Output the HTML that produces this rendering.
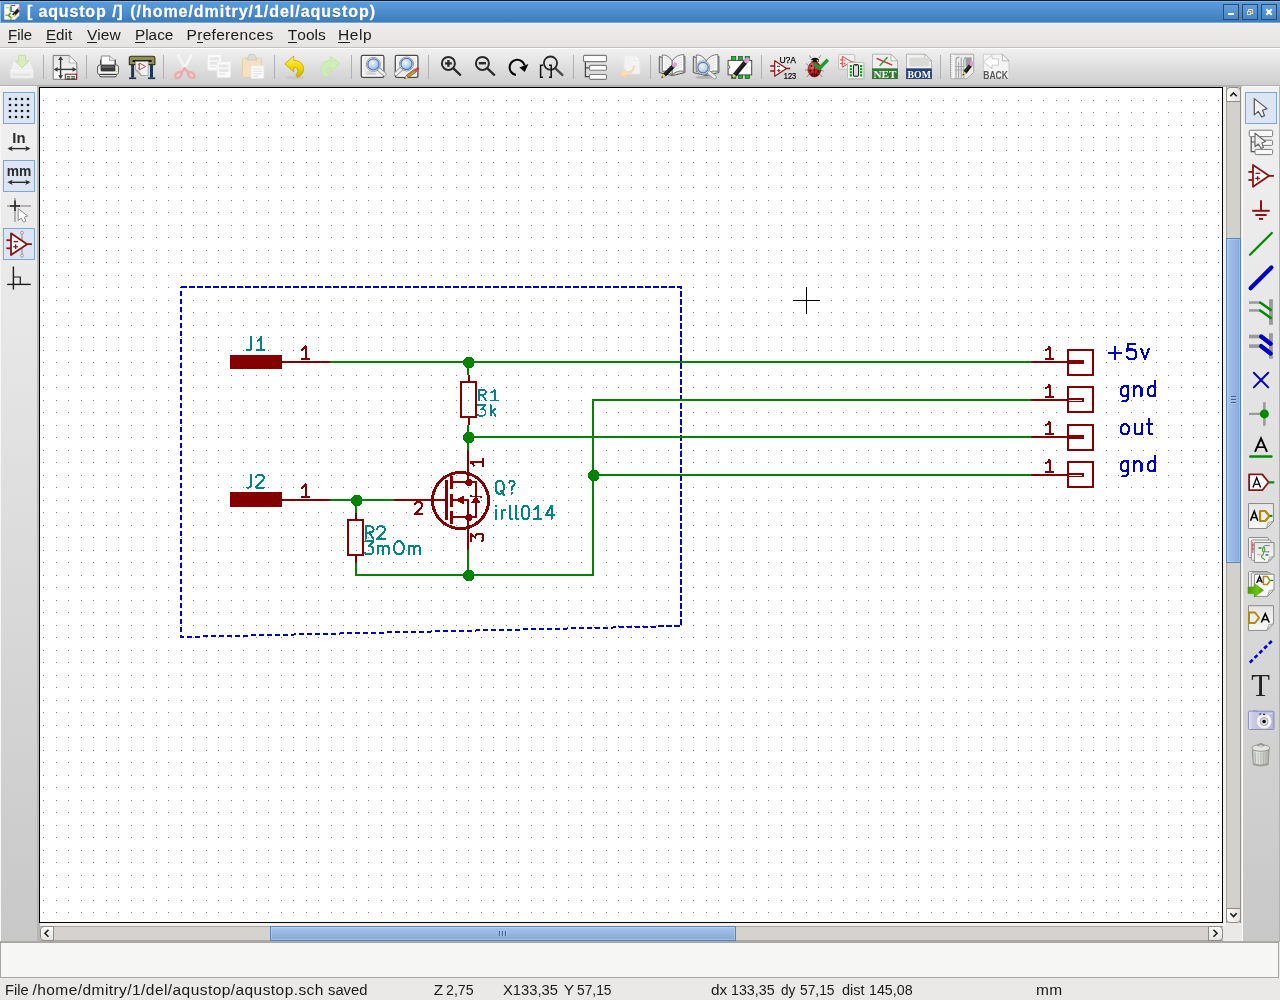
<!DOCTYPE html><html><head><meta charset="utf-8"><title>aqustop</title><style>
*{box-sizing:border-box;margin:0;padding:0}
html,body{width:1280px;height:1000px;overflow:hidden}
body{position:relative;background:#ebe9e7;font-family:"Liberation Sans",sans-serif;color:#1a1a1a}
.abs{position:absolute}
svg{position:absolute;overflow:visible}
#title{will-change:transform;left:0;top:0;width:1280px;height:23px;background:linear-gradient(#5c9cda 0px,#5596d6 6px,#3f7ebd 21px,#3d7ab8 23px)}
#title .t0{left:0;top:0;width:1280px;height:1px;background:#151a20}
#title .t1{left:0;top:1px;width:1280px;height:1px;background:#7ab6f2}
#title .t2{left:0;top:22px;width:1280px;height:1px;background:#6fa7df}
#title .txt{-webkit-text-stroke:0.3px #fff;top:2px;height:19px;line-height:19px;font-weight:bold;font-size:16px;color:#fff;white-space:nowrap;text-shadow:0 1px 1px rgba(30,60,100,.55)}
.wb{top:4px;width:16px;height:16px;border:1px solid #2b4b6e;background:linear-gradient(#62a0dc,#4685c6)}
#menu{will-change:transform;left:0;top:23px;width:1280px;height:25px;background:linear-gradient(#f4f2ef 0px,#f4f2ef 1px,#eeecea 1px,#e7e5e3 24px)}
#menu span{position:absolute;top:3px;height:18px;line-height:18px;font-size:15.5px;white-space:nowrap;color:#1a1a1a}
#menu u{text-decoration:none;border-bottom:1px solid #1a1a1a;display:inline-block;line-height:15px}
#tb{left:0;top:47px;width:1280px;height:39px;background:linear-gradient(#c4c2c0 0px,#c4c2c0 1px,#fdfdfd 1px,#fdfdfd 2px,#f0f0f0 2px,#e9e9e9 10px,#dcdcdc 23px,#cecece 38px,#b0b0b0 38px,#b0b0b0 39px)}
.sep{top:8px;width:1px;height:24px;background:#b1b1b1}
#ltb{left:0;top:86px;width:37px;height:855px;background:linear-gradient(#f1f1f1,#e6e6e6 30%,#cbcbcb 92%,#c8c8c8);border-top:1px solid #fcfcfc;border-left:1px solid #f6f6f6}
#lgap{left:37px;top:86px;width:3px;height:855px;background:#b6b6b6}
#tgap{left:37px;top:86px;width:1205px;height:1px;background:#b6b6b6}
#rgap{left:1223px;top:87px;width:3px;height:839px;background:#f3f1ee}
#bgap{left:40px;top:923px;width:1186px;height:3px;background:#f3f1ee}
#rtb{left:1242px;top:86px;width:38px;border-left:1px solid #fdfdfd;border-right:1px solid #b2b2b2;border-top:1px solid #fcfcfc;height:855px;background:linear-gradient(#f1f1f1,#e6e6e6 30%,#cbcbcb 92%,#c8c8c8)}
.tbtn{width:32px;height:32px;border:1px solid #7ea6d9;background:#dbe5f3}
#canvas{left:39px;top:87px;width:1184px;height:836px;border:1px solid #000;background:#fff}
#vsb{left:1226px;top:87px;width:15px;height:836px;background:#d3d1ce;border-left:1px solid #a6a39f;border-right:1px solid #908e8a}
#hsb{left:40px;top:926px;width:1183px;height:15px;background:#d6d2ce;border-top:1px solid #aaa7a3;border-bottom:1px solid #aaa7a3}
.sbtn{background:linear-gradient(#fdfdfd,#e6e4e2);border:1px solid #8f8c88}
.sbv{background:linear-gradient(90deg,#fdfdfd,#e4e2e0)}
.thumbv{left:1226px;width:15px;background:linear-gradient(90deg,#a7c3e9,#86aada);border:1px solid #5d83b4;box-shadow:inset 0 0 0 1px rgba(255,255,255,.22)}
.thumbh{top:926px;height:15px;background:linear-gradient(#a7c3e9,#86aada);border:1px solid #5d83b4;box-shadow:inset 0 0 0 1px rgba(255,255,255,.22)}
#msg{left:0;top:942px;width:1279px;height:36px;background:#f6f6f4;border:1px solid #a6a6a4}
#l941{left:0;top:941px;width:1280px;height:1px;background:#acaaa6}
#status{will-change:transform;left:0;top:978px;width:1280px;height:22px;background:#ebe9e7}
#status span{position:absolute;top:3px;height:18px;line-height:18px;font-size:15.5px;white-space:nowrap;color:#1a1a1a}
</style></head><body>
<svg style="left:0;top:0" width="0" height="0"><defs><linearGradient id="gpage" x1="0" y1="0" x2="0" y2="1"><stop offset="0" stop-color="#e4e4e4"/><stop offset="1" stop-color="#fafafa"/></linearGradient><linearGradient id="gcam" x1="0" y1="0" x2="1" y2="0"><stop offset="0" stop-color="#e6e6f2"/><stop offset="0.18" stop-color="#c9c9e8"/><stop offset="1" stop-color="#b4b4de"/></linearGradient><linearGradient id="gtrash" x1="0" y1="0" x2="1" y2="0"><stop offset="0" stop-color="#b4b6b2"/><stop offset="0.3" stop-color="#ecedeb"/><stop offset="0.6" stop-color="#d0d2ce"/><stop offset="1" stop-color="#acaeaa"/></linearGradient><linearGradient id="ggreen" x1="0" y1="0" x2="1" y2="0"><stop offset="0" stop-color="#4e9a06"/><stop offset="0.6" stop-color="#6cc412"/><stop offset="1" stop-color="#4e9a06"/></linearGradient><radialGradient id="glens" cx="0.4" cy="0.35" r="0.7"><stop offset="0" stop-color="#f2f6fc"/><stop offset="0.6" stop-color="#b9d0ee"/><stop offset="1" stop-color="#86acde"/></radialGradient><radialGradient id="glens2" cx="0.4" cy="0.35" r="0.7"><stop offset="0" stop-color="#eef2f6"/><stop offset="0.7" stop-color="#c4d0de"/><stop offset="1" stop-color="#9ab4d4"/></radialGradient><linearGradient id="gyel" x1="0" y1="0" x2="0" y2="1"><stop offset="0" stop-color="#fff27a"/><stop offset="0.5" stop-color="#f5d800"/><stop offset="1" stop-color="#d4aa00"/></linearGradient><radialGradient id="gbug" cx="0.35" cy="0.3" r="0.8"><stop offset="0" stop-color="#ff6a6a"/><stop offset="0.5" stop-color="#e01818"/><stop offset="1" stop-color="#8a0000"/></radialGradient></defs></svg>
<div id="title" class="abs"><div class="abs t0"></div><div class="abs t1"></div><div class="abs t2"></div>
<svg style="left:0;top:0;will-change:transform" width="1280" height="1000" viewBox="0 0 1280 1000"><path d="M3.9 3.9 H19.7 V15 L14.6 19.9 H3.9 Z" fill="#fbfbfb" stroke="#3f76b4" stroke-width="0.6" /><path d="M19.7 15 L14.6 19.9 L15.4 16 Z" fill="#e4e4e4" stroke="none" stroke-width="1" /><rect x="9.7" y="6.4" width="2.3" height="4.8" fill="#4eaa22" stroke="none" stroke-width="1" rx="0" /><path d="M10.8 13 L8.4 15.3 L11 17.6" fill="none" stroke="#4eaa22" stroke-width="1.7" /><rect x="10" y="18.4" width="2" height="1.4" fill="#6cc040" stroke="none" stroke-width="1" rx="0" /><line x1="10.6" y1="5.6" x2="14" y2="5.6" stroke="#3c5cb8" stroke-width="1" stroke-linecap="butt"/><circle cx="14.5" cy="5.5" r="0.75" fill="#cc2a2a" stroke="none" stroke-width="1"/><line x1="10.2" y1="11.6" x2="13" y2="11.6" stroke="#3c5cb8" stroke-width="1" stroke-linecap="butt"/><circle cx="13.5" cy="11.5" r="0.7" fill="#cc2a2a" stroke="none" stroke-width="1"/><circle cx="6.1" cy="15.2" r="0.75" fill="#d04a5a" stroke="none" stroke-width="1"/><line x1="6.8" y1="15.3" x2="8.4" y2="15.3" stroke="#6a7ad0" stroke-width="0.8" stroke-linecap="butt"/><rect x="6.3" y="6.9" width="2.4" height="1.5" fill="#b8b8b8" stroke="none" stroke-width="1" rx="0" /><line x1="18.6" y1="9.6" x2="13.4" y2="15.4" stroke="#202020" stroke-width="3.4" stroke-linecap="butt"/><line x1="19.9" y1="8.1" x2="18.9" y2="9.2" stroke="#e67ad6" stroke-width="3.4" stroke-linecap="butt"/><line x1="18.9" y1="9.2" x2="18.4" y2="9.8" stroke="#9a9a9a" stroke-width="3.4" stroke-linecap="butt"/><path d="M14.5 14.1 L12.2 16.6 L11.4 17.8 L13.4 17.2 L15.9 15.4 Z" fill="#e6d860" stroke="none" stroke-width="1" /><path d="M11.3 17.9 L11.9 16.9 L12.5 17.5 Z" fill="#3a3a2a" stroke="none" stroke-width="1" /><rect x="0" y="1" width="1" height="22" fill="#86bcec" stroke="none" stroke-width="1" rx="0" /></svg>
<div class="abs txt" style="left:27.0px;letter-spacing:0px">[</div>
<div class="abs txt" style="left:38.4px;letter-spacing:0.859px">aqustop</div>
<div class="abs txt" style="left:112.2px;letter-spacing:0.655px">/]</div>
<div class="abs txt" style="left:130.2px;letter-spacing:0.968px">(/home/dmitry/1/del/aqustop)</div>
<div class="abs wb" style="left:1223px"></div>
<div class="abs wb" style="left:1242px"></div>
<div class="abs wb" style="left:1261px"></div>
<svg style="left:0;top:0;will-change:transform" width="1280" height="1000" viewBox="0 0 1280 1000"><rect x="1228" y="13" width="6" height="2" fill="#ffffff" stroke="none" stroke-width="1" rx="0" /><rect x="1248.5" y="9.5" width="4" height="4" fill="none" stroke="#ead7c0" stroke-width="1" rx="0" /><rect x="1247.5" y="11.5" width="3" height="3" fill="#4f8fce" stroke="#ead7c0" stroke-width="1" rx="0" /><path d="M1267 10 L1271 14 M1271 10 L1267 14" fill="none" stroke="#ffffff" stroke-width="2" stroke-linecap="square"/></svg>
</div>
<div id="menu" class="abs">
<span style="left:7.63px;letter-spacing:0px;transform-origin:0 0;transform:scaleX(0.9677)"><u>F</u>ile</span>
<span style="left:46.2px;letter-spacing:0px;transform-origin:0 0;transform:scaleX(0.9772)"><u>E</u>dit</span>
<span style="left:87.0px;letter-spacing:0px;"><u>V</u>iew</span>
<span style="left:134.61px;letter-spacing:0px;transform-origin:0 0;transform:scaleX(0.9878)"><u>P</u>lace</span>
<span style="left:186.5px;letter-spacing:0.308px;">P<u>r</u>eferences</span>
<span style="left:287.8px;letter-spacing:0.0px;"><u>T</u>ools</span>
<span style="left:338.0px;letter-spacing:0.581px;"><u>H</u>elp</span>
</div>
<div id="tb" class="abs">
<div class="abs sep" style="left:43px"></div>
<div class="abs sep" style="left:86px"></div>
<div class="abs sep" style="left:163px"></div>
<div class="abs sep" style="left:274px"></div>
<div class="abs sep" style="left:351px"></div>
<div class="abs sep" style="left:428px"></div>
<div class="abs sep" style="left:573px"></div>
<div class="abs sep" style="left:650px"></div>
<div class="abs sep" style="left:761px"></div>
<div class="abs sep" style="left:940px"></div>
</div>
<svg style="left:0;top:0;will-change:transform" width="1280" height="1000" viewBox="0 0 1280 1000"><path d="M13.4 60.6 H30.3 L33.4 70.6 V77.4 Q33.4 78.2 32.6 78.2 H11 Q10.2 78.2 10.2 77.4 V70.6 Z" fill="#f0f0f0" stroke="#e2e2e2" stroke-width="1" stroke-linejoin="round"/><path d="M10.4 70.8 H33.2" fill="none" stroke="#f8f8f8" stroke-width="1" /><rect x="12.5" y="73.6" width="18.5" height="2" fill="#e2e2e2" stroke="none" stroke-width="1" rx="0" /><path d="M18.7 55.3 H25.6 V61.2 H28.8 L22.1 67.9 L15.5 61.2 H18.7 Z" fill="#dcebc0" stroke="#c6dea6" stroke-width="1" stroke-linejoin="round"/><path d="M53.2 55.4 H69.3 L76.8 62.9 V79.3 H53.2 Z" fill="url(#gpage)" stroke="#7a7a7a" stroke-width="1" stroke-linejoin="round"/><path d="M69.3 55.4 L76.8 62.9 L69.3 62.9 Z" fill="#ffffff" stroke="#9a9a9a" stroke-width="0.7" stroke-linejoin="round"/><line x1="60.6" y1="57.5" x2="60.6" y2="78" stroke="#3a3a3a" stroke-width="1.4" stroke-linecap="butt"/><line x1="55" y1="69.4" x2="75.4" y2="69.4" stroke="#3a3a3a" stroke-width="1.4" stroke-linecap="butt"/><path d="M60.6 56.3 L58.2 60 H63 Z M60.6 79 L58.2 75.3 H63 Z M53.8 69.4 L57.6 67 V71.8 Z M76.4 69.4 L72.6 67 V71.8 Z" fill="#3a3a3a" stroke="none" stroke-width="1" /><rect x="65.3" y="74.2" width="11.3" height="5" fill="#f4f4f4" stroke="#7a1a1a" stroke-width="1" rx="0" /><rect x="66.8" y="76.2" width="3.4" height="1.2" fill="#1e5a1e" stroke="none" stroke-width="1" rx="0" /><rect x="71.2" y="76.2" width="3.8" height="1.2" fill="#1e5a1e" stroke="none" stroke-width="1" rx="0" /><rect x="66.8" y="78.2" width="3.4" height="1" fill="#1e5a1e" stroke="none" stroke-width="1" rx="0" /><rect x="71.2" y="78.2" width="3.8" height="1" fill="#1e5a1e" stroke="none" stroke-width="1" rx="0" /><rect x="100" y="59.6" width="1.6" height="6" fill="#444" stroke="none" stroke-width="1" rx="0" /><rect x="114.4" y="59.6" width="1.6" height="6" fill="#444" stroke="none" stroke-width="1" rx="0" /><path d="M101.3 56 H109.6 L114.8 60.6 V66 H101.3 Z" fill="#fdfdfd" stroke="#7a7a7a" stroke-width="0.9" stroke-linejoin="round"/><path d="M109.6 56 V60.6 H114.8" fill="#eaeaea" stroke="#8a8a8a" stroke-width="0.7" /><rect x="97.5" y="65" width="21" height="9.4" fill="url(#gpage)" stroke="#5e5e5e" stroke-width="1" rx="2" /><rect x="101" y="65.5" width="14" height="5.6" fill="#3a3a3a" stroke="#222" stroke-width="0.6" rx="0.6" /><rect x="101.6" y="66.2" width="12.8" height="1.6" fill="#6a6a6a" stroke="none" stroke-width="1" rx="0" /><circle cx="116.4" cy="71.6" r="0.8" fill="#7fdc4a" stroke="none" stroke-width="1"/><path d="M99.6 74.4 H116.4 V75.4 Q116.4 76.8 115 76.8 H101 Q99.6 76.8 99.6 75.4 Z" fill="#fafafa" stroke="#444" stroke-width="1" /><line x1="101.5" y1="74.6" x2="114.5" y2="74.6" stroke="#333" stroke-width="1" stroke-linecap="butt"/><rect x="131.1" y="64" width="3" height="13.6" fill="#1f3558" stroke="none" stroke-width="1" rx="0" /><rect x="150" y="64" width="3" height="13.6" fill="#1f3558" stroke="none" stroke-width="1" rx="0" /><rect x="129" y="77.4" width="7.2" height="1.7" fill="#1f3558" stroke="none" stroke-width="1" rx="0" /><rect x="148" y="77.4" width="7.2" height="1.7" fill="#1f3558" stroke="none" stroke-width="1" rx="0" /><path d="M129.3 64.6 V58 Q129.3 56.2 131.2 56.2 H153 Q154.9 56.2 154.9 58 V64.6 Z" fill="#8e8e50" stroke="#33331a" stroke-width="1.1" stroke-linejoin="round"/><rect x="132.4" y="59.9" width="19.4" height="2.1" fill="#15150a" stroke="none" stroke-width="0" rx="1" /><path d="M135.6 61.4 H148.2 V75.5 H141 L135.6 70 Z" fill="#f2f2f2" stroke="#9a9a9a" stroke-width="0.8" stroke-linejoin="round"/><path d="M135.6 70 Q139.8 70.2 141 75.5 Q139.5 72.2 135.6 70" fill="#ffffff" stroke="#8a8a8a" stroke-width="0.7" /><path d="M139.3 63 V70 L145.6 66.5 Z M139.3 64.8 H137.9 M139.3 68.2 H137.9" fill="none" stroke="#cc4646" stroke-width="1" /><line x1="178.3" y1="55.8" x2="185.8" y2="69.5" stroke="#f6f6f6" stroke-width="3" stroke-linecap="round"/><line x1="191.1" y1="55.8" x2="183.6" y2="69.5" stroke="#f6f6f6" stroke-width="3" stroke-linecap="round"/><line x1="178.3" y1="55.8" x2="185.8" y2="69.5" stroke="#e6e6e6" stroke-width="0.5" stroke-linecap="butt"/><line x1="184.9" y1="68.3" x2="180.8" y2="72.8" stroke="#f1a9a9" stroke-width="2.6" stroke-linecap="round"/><line x1="184.5" y1="68.3" x2="188.8" y2="72.8" stroke="#f1a9a9" stroke-width="2.6" stroke-linecap="round"/><ellipse cx="178.3" cy="75" rx="3.6" ry="2.5" transform="rotate(-42 178.3 75)" fill="none" stroke="#f1a9a9" stroke-width="2.2"/><ellipse cx="191.3" cy="75" rx="3.6" ry="2.5" transform="rotate(42 191.3 75)" fill="none" stroke="#f1a9a9" stroke-width="2.2"/><rect x="207.7" y="54.6" width="13.4" height="15.6" fill="#fbfbfb" stroke="#ececec" stroke-width="1" rx="0.8" /><rect x="209.7" y="57.2" width="9.4" height="3.2" fill="#e6e6e6" stroke="none" stroke-width="1" rx="0" /><rect x="209.7" y="61.6" width="9.4" height="3.2" fill="#e6e6e6" stroke="none" stroke-width="1" rx="0" /><rect x="209.7" y="66" width="6" height="1.6" fill="#e6e6e6" stroke="none" stroke-width="1" rx="0" /><rect x="217.1" y="61.8" width="13.4" height="15.6" fill="#fbfbfb" stroke="#ececec" stroke-width="1" rx="0.8" /><rect x="219.1" y="64.4" width="9.4" height="3.2" fill="#e6e6e6" stroke="none" stroke-width="1" rx="0" /><rect x="219.1" y="68.8" width="9.4" height="3.2" fill="#e6e6e6" stroke="none" stroke-width="1" rx="0" /><rect x="219.1" y="73.2" width="6" height="1.6" fill="#e6e6e6" stroke="none" stroke-width="1" rx="0" /><rect x="242.4" y="58" width="19.2" height="19.4" fill="#f4e0c2" stroke="#e6cfaa" stroke-width="1" rx="1.8" /><path d="M247 60 V58 H248.6 V55.6 Q248.6 54.6 249.6 54.6 H254 Q255 54.6 255 55.6 V58 H256.6 V60 Z" fill="#dededa" stroke="#c4c4c0" stroke-width="0.8" stroke-linejoin="round"/><rect x="251.2" y="66" width="12.6" height="12.2" fill="#fdfdfd" stroke="#ececec" stroke-width="1" rx="0.8" /><rect x="252.8" y="68.4" width="9.4" height="1.3" fill="#e4e4e4" stroke="none" stroke-width="1" rx="0" /><rect x="252.8" y="70.8" width="9.4" height="1.3" fill="#e4e4e4" stroke="none" stroke-width="1" rx="0" /><rect x="252.8" y="73.2" width="9.4" height="1.3" fill="#e4e4e4" stroke="none" stroke-width="1" rx="0" /><rect x="252.8" y="75.6" width="5.4" height="1.3" fill="#e4e4e4" stroke="none" stroke-width="1" rx="0" /><ellipse cx="295" cy="77.4" rx="9" ry="2" fill="rgba(0,0,0,0.06)" stroke="none" stroke-width="1"/><path d="M284.8 63.8 L293.8 56 V60.4 Q300.4 60.6 302.8 65.4 Q305.2 71.4 300.6 75.6 L297.2 77.3 L296 74.8 Q299.6 71.2 297.2 68.4 Q296 67.4 293.8 67.6 V71.9 Z" fill="url(#gyel)" stroke="#c9a800" stroke-width="0.9" stroke-linejoin="round"/><g transform="translate(624.5 0) scale(-1 1)"><path d="M284.8 63.8 L293.8 56 V60.4 Q300.4 60.6 302.8 65.4 Q305.2 71.4 300.6 75.6 L297.2 77.3 L296 74.8 Q299.6 71.2 297.2 68.4 Q296 67.4 293.8 67.6 V71.9 Z" fill="#cdeeb6" stroke="#bfe4a6" stroke-width="0.9" stroke-linejoin="round"/></g><rect x="361.7" y="56.2" width="22.4" height="22" fill="rgba(0,0,0,0.12)" stroke="none" stroke-width="0" rx="2" /><rect x="361.3" y="55.4" width="22.6" height="22" fill="#f6f6f6" stroke="#484848" stroke-width="1.25" rx="1.6" /><rect x="362.9" y="57" width="19.4" height="18.8" fill="#ececec" stroke="#fff" stroke-width="0.8" rx="0" /><rect x="395.7" y="56.2" width="22.4" height="22" fill="rgba(0,0,0,0.12)" stroke="none" stroke-width="0" rx="2" /><rect x="395.3" y="55.4" width="22.6" height="22" fill="#f6f6f6" stroke="#484848" stroke-width="1.25" rx="1.6" /><rect x="396.9" y="57" width="19.4" height="18.8" fill="#ececec" stroke="#fff" stroke-width="0.8" rx="0" /><line x1="366.5" y1="72" x2="375" y2="72" stroke="#c0c0c0" stroke-width="0.8" stroke-linecap="butt"/><line x1="366.5" y1="74" x2="376" y2="74" stroke="#b0b0b0" stroke-width="0.8" stroke-linecap="butt"/><line x1="378.477" y1="68.9234" x2="384.4" y2="74.2" stroke="#8a8a8a" stroke-width="4.2" stroke-linecap="round"/><line x1="378.477" y1="68.9234" x2="384.4" y2="74.2" stroke="#ececec" stroke-width="2.8" stroke-linecap="round"/><circle cx="373.4" cy="64.4" r="7" fill="#fbfbfb" stroke="#8e8e8e" stroke-width="0.9"/><circle cx="373.4" cy="64.4" r="5.6" fill="url(#glens)" stroke="#4a7cc4" stroke-width="1.2"/><line x1="401.529" y1="68.6398" x2="396" y2="73.8" stroke="#8a8a8a" stroke-width="4.2" stroke-linecap="round"/><line x1="401.529" y1="68.6398" x2="396" y2="73.8" stroke="#ececec" stroke-width="2.8" stroke-linecap="round"/><circle cx="406.5" cy="64" r="7" fill="#fbfbfb" stroke="#8e8e8e" stroke-width="0.9"/><circle cx="406.5" cy="64" r="5.6" fill="url(#glens)" stroke="#4a7cc4" stroke-width="1.2"/><path d="M404.20 78.80 L408.49 77.66 L406.53 75.02 Z" fill="#ecd9a0" stroke="#8a7a30" stroke-width="0.5" /><path d="M404.20 78.80 L405.83 78.37 L405.08 77.36 Z" fill="#1a1a1a" stroke="none" stroke-width="1" /><path d="M408.49 77.66 L416.28 71.88 L414.31 69.23 L406.53 75.02 Z" fill="#e3a02e" stroke="#000" stroke-width="0.4" /><line x1="407.666" y1="75.71" x2="415.046" y2="70.2249" stroke="#5a5a5a" stroke-width="0.6" stroke-linecap="butt"/><path d="M416.28 71.88 L417.20 71.19 L415.23 68.54 L414.31 69.23 Z" fill="#b8b8b8" stroke="#777" stroke-width="0.4" /><path d="M417.20 71.19 L415.23 68.54 A1.68 1.68 0 0 0 417.20 71.19 Z" fill="#e02424" stroke="#c080b8" stroke-width="0.3" /><circle cx="417.47" cy="68.9368" r="1.4025" fill="#e02424" stroke="none" stroke-width="1"/><line x1="453.4" y1="68.4" x2="460.2" y2="74.8" stroke="#2a2a2a" stroke-width="2.3" stroke-linecap="round"/><circle cx="448.4" cy="63.4" r="6.5" fill="none" stroke="#2a2a2a" stroke-width="2"/><line x1="487.4" y1="68.4" x2="494.2" y2="74.8" stroke="#2a2a2a" stroke-width="2.3" stroke-linecap="round"/><circle cx="482.4" cy="63.4" r="6.5" fill="none" stroke="#2a2a2a" stroke-width="2"/><line x1="445" y1="63.4" x2="451.8" y2="63.4" stroke="#2a2a2a" stroke-width="2.3" stroke-linecap="butt"/><line x1="448.4" y1="60" x2="448.4" y2="66.8" stroke="#2a2a2a" stroke-width="2.3" stroke-linecap="butt"/><line x1="478.8" y1="63.2" x2="486" y2="63.2" stroke="#2a2a2a" stroke-width="2.5" stroke-linecap="butt"/><path d="M515.96 74.98 A7.7 7.7 0 1 1 524.74 65.4" fill="none" stroke="#000" stroke-width="2.1" /><path d="M519.4 67.5 L528.4 64 L524.7 71.9 Z" fill="#000" stroke="none" stroke-width="1" /><line x1="555.4" y1="68.4" x2="562.3" y2="74.8" stroke="#4a4a4a" stroke-width="2.5" stroke-linecap="round"/><circle cx="550.5" cy="63.1" r="6.6" fill="none" stroke="#2a2a2a" stroke-width="1.8"/><path d="M543 65.2 H540.6 V77.3 H543 M549 65.2 H551.2 V77.3 H549" fill="none" stroke="#111" stroke-width="1.5" /><path d="M585.4 61.6 V76.7 H589.4 M585.4 67.8 H589.4" fill="none" stroke="#444" stroke-width="1.2" /><rect x="583.5" y="55.4" width="23" height="6.2" fill="#fdfdfd" stroke="#7c7c7c" stroke-width="1.1" rx="1.2" /><rect x="589.5" y="65.4" width="17" height="4.9" fill="#fdfdfd" stroke="#7c7c7c" stroke-width="1.1" rx="1.2" /><rect x="589.5" y="74.5" width="17" height="4.9" fill="#fdfdfd" stroke="#7c7c7c" stroke-width="1.1" rx="1.2" /><path d="M624.2 55.4 H634.6 L639.7 60.4 V73.7 H624.2 Z" fill="#f3f3f3" stroke="#ececec" stroke-width="1" stroke-linejoin="round"/><path d="M634.6 55.4 V60.4 H639.7" fill="#fafafa" stroke="#e6e6e6" stroke-width="0.7" /><path d="M633.4 66 Q633.6 71.6 625.6 72 V69.6 L618.6 74 L625.6 78 V75.4 Q633.4 74.4 634.4 66 Z" fill="#f9dcb8" stroke="#f4d0a2" stroke-width="0.7" stroke-linejoin="round"/><path d="M659.3 56.4 L672.2 61.6 L684.9 56.4 V72.6 L672.2 75.6 L659.3 72.6 Z" fill="#d6d6d6" stroke="#5a5a5a" stroke-width="1" stroke-linejoin="round"/><path d="M662.3 55 Q668.3 54.6 672.2 61 V75 Q667.3 69.5 662.3 71.6 Z" fill="#fbfbfb" stroke="#6a6a6a" stroke-width="0.9" stroke-linejoin="round"/><path d="M683.9 54.6 Q676.3 54.6 672.2 61 V75 Q677.3 69.5 683.9 71.4 Z" fill="#fbfbfb" stroke="#6a6a6a" stroke-width="0.9" stroke-linejoin="round"/><line x1="664.3" y1="57.4" x2="670.3" y2="60.2" stroke="#cfcfcf" stroke-width="0.7" stroke-linecap="butt"/><line x1="674.3" y1="60.2" x2="681.9" y2="57.2" stroke="#cfcfcf" stroke-width="0.7" stroke-linecap="butt"/><line x1="664.3" y1="59.8" x2="670.3" y2="62.6" stroke="#cfcfcf" stroke-width="0.7" stroke-linecap="butt"/><line x1="674.3" y1="62.6" x2="681.9" y2="59.6" stroke="#cfcfcf" stroke-width="0.7" stroke-linecap="butt"/><line x1="664.3" y1="62.2" x2="670.3" y2="65" stroke="#cfcfcf" stroke-width="0.7" stroke-linecap="butt"/><line x1="674.3" y1="65" x2="681.9" y2="62" stroke="#cfcfcf" stroke-width="0.7" stroke-linecap="butt"/><line x1="664.3" y1="64.6" x2="670.3" y2="67.4" stroke="#cfcfcf" stroke-width="0.7" stroke-linecap="butt"/><line x1="674.3" y1="67.4" x2="681.9" y2="64.4" stroke="#cfcfcf" stroke-width="0.7" stroke-linecap="butt"/><line x1="664.3" y1="67" x2="670.3" y2="69.8" stroke="#cfcfcf" stroke-width="0.7" stroke-linecap="butt"/><line x1="674.3" y1="69.8" x2="681.9" y2="66.8" stroke="#cfcfcf" stroke-width="0.7" stroke-linecap="butt"/><path d="M661.40 78.00 L665.98 76.04 L663.36 73.42 Z" fill="#f0e27a" stroke="#8a7a30" stroke-width="0.5" /><path d="M661.40 78.00 L663.14 77.25 L662.15 76.26 Z" fill="#1a1a1a" stroke="none" stroke-width="1" /><path d="M665.98 76.04 L674.25 67.77 L671.63 65.15 L663.36 73.42 Z" fill="#141414" stroke="#000" stroke-width="0.4" /><line x1="664.697" y1="74.049" x2="672.61" y2="66.1358" stroke="#5a5a5a" stroke-width="0.6" stroke-linecap="butt"/><path d="M674.25 67.77 L675.16 66.86 L672.54 64.24 L671.63 65.15 Z" fill="#b8b8b8" stroke="#777" stroke-width="0.4" /><path d="M675.16 66.86 L672.54 64.24 A1.89 1.89 0 0 0 675.16 66.86 Z" fill="#e79ad6" stroke="#c080b8" stroke-width="0.3" /><circle cx="675.089" cy="64.3109" r="2.072" fill="#e79ad6" stroke="none" stroke-width="1"/><path d="M693.3 56.4 L706.2 61.6 L718.9 56.4 V72.6 L706.2 75.6 L693.3 72.6 Z" fill="#d6d6d6" stroke="#5a5a5a" stroke-width="1" stroke-linejoin="round"/><path d="M696.3 55 Q702.3 54.6 706.2 61 V75 Q701.3 69.5 696.3 71.6 Z" fill="#fbfbfb" stroke="#6a6a6a" stroke-width="0.9" stroke-linejoin="round"/><path d="M717.9 54.6 Q710.3 54.6 706.2 61 V75 Q711.3 69.5 717.9 71.4 Z" fill="#fbfbfb" stroke="#6a6a6a" stroke-width="0.9" stroke-linejoin="round"/><line x1="698.3" y1="57.4" x2="704.3" y2="60.2" stroke="#cfcfcf" stroke-width="0.7" stroke-linecap="butt"/><line x1="708.3" y1="60.2" x2="715.9" y2="57.2" stroke="#cfcfcf" stroke-width="0.7" stroke-linecap="butt"/><line x1="698.3" y1="59.8" x2="704.3" y2="62.6" stroke="#cfcfcf" stroke-width="0.7" stroke-linecap="butt"/><line x1="708.3" y1="62.6" x2="715.9" y2="59.6" stroke="#cfcfcf" stroke-width="0.7" stroke-linecap="butt"/><line x1="698.3" y1="62.2" x2="704.3" y2="65" stroke="#cfcfcf" stroke-width="0.7" stroke-linecap="butt"/><line x1="708.3" y1="65" x2="715.9" y2="62" stroke="#cfcfcf" stroke-width="0.7" stroke-linecap="butt"/><line x1="698.3" y1="64.6" x2="704.3" y2="67.4" stroke="#cfcfcf" stroke-width="0.7" stroke-linecap="butt"/><line x1="708.3" y1="67.4" x2="715.9" y2="64.4" stroke="#cfcfcf" stroke-width="0.7" stroke-linecap="butt"/><line x1="698.3" y1="67" x2="704.3" y2="69.8" stroke="#cfcfcf" stroke-width="0.7" stroke-linecap="butt"/><line x1="708.3" y1="69.8" x2="715.9" y2="66.8" stroke="#cfcfcf" stroke-width="0.7" stroke-linecap="butt"/><ellipse cx="704.5" cy="77.4" rx="9" ry="1.6" fill="rgba(0,0,0,0.16)" stroke="none" stroke-width="1"/><line x1="708.008" y1="71.7442" x2="714.6" y2="77.2" stroke="#8a8a8a" stroke-width="4.2" stroke-linecap="round"/><line x1="708.008" y1="71.7442" x2="714.6" y2="77.2" stroke="#ececec" stroke-width="2.8" stroke-linecap="round"/><circle cx="703" cy="67.6" r="6.7" fill="#fbfbfb" stroke="#8e8e8e" stroke-width="0.9"/><circle cx="703" cy="67.6" r="5.3" fill="url(#glens2)" stroke="#4a7cc4" stroke-width="1.2"/><rect x="731.6" y="56.5" width="4.2" height="5.6" fill="#00c424" stroke="#3a3a3a" stroke-width="0.7" rx="0" /><rect x="731.6" y="72.8" width="4.2" height="5.6" fill="#00c424" stroke="#3a3a3a" stroke-width="0.7" rx="0" /><rect x="738.4" y="56.5" width="4.2" height="5.6" fill="#00c424" stroke="#3a3a3a" stroke-width="0.7" rx="0" /><rect x="738.4" y="72.8" width="4.2" height="5.6" fill="#00c424" stroke="#3a3a3a" stroke-width="0.7" rx="0" /><rect x="745.2" y="56.5" width="4.2" height="5.6" fill="#00c424" stroke="#3a3a3a" stroke-width="0.7" rx="0" /><rect x="745.2" y="72.8" width="4.2" height="5.6" fill="#00c424" stroke="#3a3a3a" stroke-width="0.7" rx="0" /><rect x="728.1" y="60.4" width="23.6" height="14.5" fill="#fdfdfd" stroke="#4a4a4a" stroke-width="1" rx="0" /><path d="M728.1 65.4 A1.7 1.7 0 0 1 728.1 68.8" fill="#c8c8c8" stroke="#555" stroke-width="0.8" /><path d="M731.80 78.60 L736.53 76.02 L733.44 73.47 Z" fill="#f0e27a" stroke="#8a7a30" stroke-width="0.5" /><path d="M731.80 78.60 L733.60 77.62 L732.42 76.65 Z" fill="#1a1a1a" stroke="none" stroke-width="1" /><path d="M736.53 76.02 L746.78 63.59 L743.69 61.05 L733.44 73.47 Z" fill="#141414" stroke="#000" stroke-width="0.4" /><line x1="734.915" y1="74.0397" x2="744.85" y2="62.0009" stroke="#5a5a5a" stroke-width="0.6" stroke-linecap="butt"/><path d="M746.78 63.59 L747.67 62.51 L744.58 59.97 L743.69 61.05 Z" fill="#b8b8b8" stroke="#777" stroke-width="0.4" /><path d="M747.67 62.51 L744.58 59.97 A2.04 2.04 0 0 0 747.67 62.51 Z" fill="#e79ad6" stroke="#c080b8" stroke-width="0.3" /><circle cx="747.33" cy="59.7817" r="2.24" fill="#e79ad6" stroke="none" stroke-width="1"/><path d="M774.7 60.7 L786.5 68.5 L774.7 76.2 Z" fill="#fbfbfb" stroke="#8a1414" stroke-width="1.2" stroke-linejoin="round"/><path d="M770.2 65.9 H774.7 M770.2 71 H774.7 M786.5 68.5 H790.2" fill="none" stroke="#8a1414" stroke-width="1.5" /><path d="M777 66.3 H780 M777.2 70.6 H780.4 M778.8 69 V72.2" fill="none" stroke="#8a1414" stroke-width="1" /><text x="779.4" y="62.8" font-family="Liberation Sans" font-size="8.9" font-weight="normal" fill="#000" textLength="16.6" lengthAdjust="spacingAndGlyphs" stroke="#000" stroke-width="0.25">U?A</text><text x="783.8" y="78.5" font-family="Liberation Sans" font-size="8.6" font-weight="normal" fill="#000" textLength="12.4" lengthAdjust="spacingAndGlyphs" stroke="#000" stroke-width="0.2">123</text><path d="M811 58 L809.6 55.4 M819 58 L820.6 55.4 M808.8 66 L806 63.6 M808.2 70 L805 70 M809.4 74 L806.6 77 M820 66 L823 64 M820.8 70.4 L823.6 71 M819.4 74 L822.4 77" fill="none" stroke="#7a7a7a" stroke-width="0.9" /><ellipse cx="815" cy="60.3" rx="4" ry="2.6" fill="#111" stroke="none" stroke-width="1"/><circle cx="811.9" cy="60.7" r="0.95" fill="#f0d020" stroke="none" stroke-width="1"/><circle cx="817.6" cy="60.7" r="0.95" fill="#f0d020" stroke="none" stroke-width="1"/><ellipse cx="814.4" cy="69.3" rx="6.4" ry="7.6" fill="url(#gbug)" stroke="#5a0000" stroke-width="0.6"/><line x1="814.4" y1="62" x2="814.4" y2="76.8" stroke="#3a0000" stroke-width="0.7" stroke-linecap="butt"/><circle cx="811.4" cy="66" r="1.05" fill="#1a0000" stroke="none" stroke-width="1"/><circle cx="817.2" cy="66.6" r="1.05" fill="#1a0000" stroke="none" stroke-width="1"/><circle cx="810.4" cy="70.6" r="1.05" fill="#1a0000" stroke="none" stroke-width="1"/><circle cx="818" cy="71.4" r="1.05" fill="#1a0000" stroke="none" stroke-width="1"/><circle cx="812.4" cy="74.4" r="1.05" fill="#1a0000" stroke="none" stroke-width="1"/><circle cx="816.4" cy="74.8" r="1.05" fill="#1a0000" stroke="none" stroke-width="1"/><circle cx="814.4" cy="70" r="1.05" fill="#1a0000" stroke="none" stroke-width="1"/><path d="M813.4 63.6 L819.6 68.2 L827.8 59.8" fill="none" stroke="#1e9a30" stroke-width="3.4" stroke-linejoin="miter"/><rect x="838.6" y="54.4" width="16.2" height="14.9" fill="#efefef" stroke="#c2c2c2" stroke-width="1" rx="1" /><path d="M842.3 56.4 L851.3 61.7 L842.3 67.2 Z M840 59.8 H842.3 M840 63.6 H842.3 M851.3 61.7 H853.6" fill="none" stroke="#dc4a4a" stroke-width="1" /><path d="M843.6 60.2 H845.4 M843.6 63.6 H845.6 M844.6 62.6 V64.6" fill="none" stroke="#dc4a4a" stroke-width="0.7" /><rect x="848.4" y="63.6" width="16.2" height="16" fill="rgba(0,0,0,0.12)" stroke="none" stroke-width="0" rx="1.2" /><rect x="847.6" y="62.6" width="16.2" height="16.2" fill="#fcfcfc" stroke="#b8b8b8" stroke-width="1" rx="1" /><rect x="853.4" y="64.7" width="5.2" height="11.5" fill="#dcdcdc" stroke="#111" stroke-width="1" rx="0.6" /><rect x="855.2" y="64.7" width="1.6" height="1.3" fill="#444" stroke="none" stroke-width="1" rx="0" /><rect x="849.7" y="65" width="2.2" height="2.2" fill="#009a00" stroke="none" stroke-width="1" rx="0" /><rect x="860.1" y="65" width="2.2" height="2.2" fill="#009a00" stroke="none" stroke-width="1" rx="0" /><rect x="849.7" y="68.1" width="2.2" height="2.2" fill="#009a00" stroke="none" stroke-width="1" rx="0" /><rect x="860.1" y="68.1" width="2.2" height="2.2" fill="#009a00" stroke="none" stroke-width="1" rx="0" /><rect x="849.7" y="71.2" width="2.2" height="2.2" fill="#009a00" stroke="none" stroke-width="1" rx="0" /><rect x="860.1" y="71.2" width="2.2" height="2.2" fill="#009a00" stroke="none" stroke-width="1" rx="0" /><rect x="849.7" y="74.3" width="2.2" height="2.2" fill="#009a00" stroke="none" stroke-width="1" rx="0" /><rect x="860.1" y="74.3" width="2.2" height="2.2" fill="#009a00" stroke="none" stroke-width="1" rx="0" /><path d="M872.5 54.2 H890.9 L897.5 60.8 V78.7 H872.5 Z" fill="#efefef" stroke="#b4b4b4" stroke-width="1" stroke-linejoin="round"/><path d="M890.9 54.2 L897.5 60.8 L890.9 60.8 Z" fill="#ffffff" stroke="#9a9a9a" stroke-width="0.7" stroke-linejoin="round"/><rect x="872.5" y="68.8" width="25" height="9.9" fill="#2e7d2e" stroke="#245f24" stroke-width="0.6" rx="0" /><line x1="876.6" y1="58.3" x2="892.2" y2="65.2" stroke="#d02a2a" stroke-width="1.3" stroke-linecap="butt"/><line x1="879.6" y1="65.8" x2="887.6" y2="57.2" stroke="#2a9a2a" stroke-width="1.3" stroke-linecap="butt"/><text x="873.5" y="77.5" font-family="Liberation Serif" font-size="10.4" font-weight="bold" fill="#fff" textLength="23" lengthAdjust="spacingAndGlyphs">NET</text><path d="M906.5 54.2 H924.9 L931.5 60.8 V78.7 H906.5 Z" fill="#f1f1f1" stroke="#b4b4b4" stroke-width="1" stroke-linejoin="round"/><path d="M924.9 54.2 L931.5 60.8 L924.9 60.8 Z" fill="#ffffff" stroke="#9a9a9a" stroke-width="0.7" stroke-linejoin="round"/><rect x="909.4" y="57.6" width="19.8" height="8.8" fill="#d9d9d5" stroke="none" stroke-width="1" rx="0" /><rect x="906.5" y="68.8" width="25" height="9.9" fill="#24407a" stroke="#1c3264" stroke-width="0.6" rx="0" /><text x="907.6" y="77.5" font-family="Liberation Serif" font-size="10.4" font-weight="bold" fill="#fff" textLength="23.3" lengthAdjust="spacingAndGlyphs">BOM</text><path d="M950.5 54.2 H973.7 V72.4 L966.8 78.7 H950.5 Z" fill="#ececec" stroke="#a8a8a8" stroke-width="1" stroke-linejoin="round"/><rect x="951" y="54.8" width="3" height="23.4" fill="#fafafa" stroke="none" stroke-width="1" rx="0" /><line x1="951" y1="56.5" x2="952.6" y2="56.5" stroke="#b8b8b8" stroke-width="0.6" stroke-linecap="butt"/><line x1="951" y1="58.5" x2="952.6" y2="58.5" stroke="#b8b8b8" stroke-width="0.6" stroke-linecap="butt"/><line x1="951" y1="60.5" x2="952.6" y2="60.5" stroke="#b8b8b8" stroke-width="0.6" stroke-linecap="butt"/><line x1="951" y1="62.5" x2="952.6" y2="62.5" stroke="#b8b8b8" stroke-width="0.6" stroke-linecap="butt"/><line x1="951" y1="64.5" x2="952.6" y2="64.5" stroke="#b8b8b8" stroke-width="0.6" stroke-linecap="butt"/><line x1="951" y1="66.5" x2="952.6" y2="66.5" stroke="#b8b8b8" stroke-width="0.6" stroke-linecap="butt"/><line x1="951" y1="68.5" x2="952.6" y2="68.5" stroke="#b8b8b8" stroke-width="0.6" stroke-linecap="butt"/><line x1="951" y1="70.5" x2="952.6" y2="70.5" stroke="#b8b8b8" stroke-width="0.6" stroke-linecap="butt"/><line x1="951" y1="72.5" x2="952.6" y2="72.5" stroke="#b8b8b8" stroke-width="0.6" stroke-linecap="butt"/><line x1="951" y1="74.5" x2="952.6" y2="74.5" stroke="#b8b8b8" stroke-width="0.6" stroke-linecap="butt"/><line x1="951" y1="76.5" x2="952.6" y2="76.5" stroke="#b8b8b8" stroke-width="0.6" stroke-linecap="butt"/><path d="M956 78 V60 Q956 57.4 958.6 57.4 H959.4 M958.6 78 V62 M961.2 78 V57.4 M963.8 78 V62 Q963.8 57.6 966 57.4 M955 66.5 H964.5 M955 70 H964.5" fill="none" stroke="#a6a6a6" stroke-width="1.1" /><rect x="965.6" y="57.4" width="6" height="9" fill="#9c9c9c" stroke="none" stroke-width="1" rx="0" /><path d="M962.60 75.40 L966.66 73.01 L963.90 70.87 Z" fill="#f0e27a" stroke="#8a7a30" stroke-width="0.5" /><path d="M962.60 75.40 L964.14 74.49 L963.09 73.68 Z" fill="#1a1a1a" stroke="none" stroke-width="1" /><path d="M966.66 73.01 L971.68 66.54 L968.91 64.40 L963.90 70.87 Z" fill="#141414" stroke="#000" stroke-width="0.4" /><line x1="965.241" y1="71.2793" x2="969.952" y2="65.2043" stroke="#5a5a5a" stroke-width="0.6" stroke-linecap="butt"/><path d="M971.68 66.54 L972.43 65.58 L969.67 63.43 L968.91 64.40 Z" fill="#b8b8b8" stroke="#777" stroke-width="0.4" /><path d="M972.43 65.58 L969.67 63.43 A1.79 1.79 0 0 0 972.43 65.58 Z" fill="#e79ad6" stroke="#c080b8" stroke-width="0.3" /><circle cx="972.061" cy="63.1973" r="1.96" fill="#e79ad6" stroke="none" stroke-width="1"/><path d="M983.3 54.2 H1002.4 L1009 60.8 V78.7 H983.3 Z" fill="#f4f4f4" stroke="#cdcdcd" stroke-width="1" stroke-linejoin="round"/><path d="M1002.4 54.2 L1009 60.8 L1002.4 60.8 Z" fill="#ffffff" stroke="#9a9a9a" stroke-width="0.7" stroke-linejoin="round"/><path d="M983.6 61.8 L992 55.4 V58.8 H998.4 V65.2 H992 V68.6 Z" fill="#ffffff" stroke="#c4c4c4" stroke-width="0.9" stroke-linejoin="round"/><text x="983.2" y="79.3" font-family="Liberation Sans" font-size="10.6" font-weight="bold" fill="#585858" textLength="24.8" lengthAdjust="spacingAndGlyphs">BACK</text></svg>
<div id="ltb" class="abs"></div><div id="lgap" class="abs"></div><div id="tgap" class="abs"></div><div id="rgap" class="abs"></div><div id="bgap" class="abs"></div>
<div class="abs tbtn" style="left:3px;top:92px"></div>
<div class="abs tbtn" style="left:3px;top:160px"></div>
<div class="abs tbtn" style="left:3px;top:228px"></div>
<svg style="left:0;top:0;will-change:transform" width="1280" height="1000" viewBox="0 0 1280 1000"><circle cx="10" cy="99" r="1.35" fill="#1a1a1a" stroke="none" stroke-width="1"/><circle cx="10" cy="105" r="1.35" fill="#1a1a1a" stroke="none" stroke-width="1"/><circle cx="10" cy="111" r="1.35" fill="#1a1a1a" stroke="none" stroke-width="1"/><circle cx="10" cy="117" r="1.35" fill="#1a1a1a" stroke="none" stroke-width="1"/><circle cx="16" cy="99" r="1.35" fill="#1a1a1a" stroke="none" stroke-width="1"/><circle cx="16" cy="105" r="1.35" fill="#1a1a1a" stroke="none" stroke-width="1"/><circle cx="16" cy="111" r="1.35" fill="#1a1a1a" stroke="none" stroke-width="1"/><circle cx="16" cy="117" r="1.35" fill="#1a1a1a" stroke="none" stroke-width="1"/><circle cx="22" cy="99" r="1.35" fill="#1a1a1a" stroke="none" stroke-width="1"/><circle cx="22" cy="105" r="1.35" fill="#1a1a1a" stroke="none" stroke-width="1"/><circle cx="22" cy="111" r="1.35" fill="#1a1a1a" stroke="none" stroke-width="1"/><circle cx="22" cy="117" r="1.35" fill="#1a1a1a" stroke="none" stroke-width="1"/><circle cx="28" cy="99" r="1.35" fill="#1a1a1a" stroke="none" stroke-width="1"/><circle cx="28" cy="105" r="1.35" fill="#1a1a1a" stroke="none" stroke-width="1"/><circle cx="28" cy="111" r="1.35" fill="#1a1a1a" stroke="none" stroke-width="1"/><circle cx="28" cy="117" r="1.35" fill="#1a1a1a" stroke="none" stroke-width="1"/><text x="12.3" y="143" font-family="Liberation Sans" font-size="14.5" font-weight="bold" fill="#2a2a2a" textLength="13.2" lengthAdjust="spacingAndGlyphs">In</text><line x1="9.3" y1="148.6" x2="28.7" y2="148.6" stroke="#2a2a2a" stroke-width="1.4" stroke-linecap="butt"/><path d="M7.3 148.6 L12.8 146 L11.3 148.6 Z" fill="#2a2a2a" stroke="none" stroke-width="1" /><path d="M7.3 148.6 L12.8 151.2 L11.3 148.6 Z" fill="#2a2a2a" stroke="none" stroke-width="1" /><path d="M30.7 148.6 L25.2 146 L26.7 148.6 Z" fill="#2a2a2a" stroke="none" stroke-width="1" /><path d="M30.7 148.6 L25.2 151.2 L26.7 148.6 Z" fill="#2a2a2a" stroke="none" stroke-width="1" /><text x="6.8" y="176" font-family="Liberation Sans" font-size="14.5" font-weight="bold" fill="#2a2a2a" textLength="24.6" lengthAdjust="spacingAndGlyphs">mm</text><line x1="9.3" y1="182.3" x2="28.7" y2="182.3" stroke="#2a2a2a" stroke-width="1.4" stroke-linecap="butt"/><path d="M7.3 182.3 L12.8 179.7 L11.3 182.3 Z" fill="#2a2a2a" stroke="none" stroke-width="1" /><path d="M7.3 182.3 L12.8 184.9 L11.3 182.3 Z" fill="#2a2a2a" stroke="none" stroke-width="1" /><path d="M30.7 182.3 L25.2 179.7 L26.7 182.3 Z" fill="#2a2a2a" stroke="none" stroke-width="1" /><path d="M30.7 182.3 L25.2 184.9 L26.7 182.3 Z" fill="#2a2a2a" stroke="none" stroke-width="1" /><line x1="7" y1="206" x2="31" y2="206" stroke="#9a9a9a" stroke-width="1.4" stroke-linecap="butt"/><line x1="15" y1="198" x2="15" y2="222" stroke="#9a9a9a" stroke-width="1.4" stroke-linecap="butt"/><line x1="10" y1="206" x2="20" y2="206" stroke="#2a2a2a" stroke-width="1.6" stroke-linecap="butt"/><line x1="15" y1="200.5" x2="15" y2="211" stroke="#2a2a2a" stroke-width="1.6" stroke-linecap="butt"/><path d="M18.20 208.60 L18.20 220.66 L21.16 218.07 L23.68 222.22 L25.75 221.18 L24.27 217.26 L27.60 216.00 Z" fill="#ffffff" stroke="#8a8a8a" stroke-width="1" stroke-linejoin="round"/><line x1="22" y1="232.8" x2="22" y2="255.7" stroke="#a8a8a8" stroke-width="1.6" stroke-linecap="butt"/><circle cx="22" cy="232.8" r="1.5" fill="#e8e8e8" stroke="#a0a0a0" stroke-width="1"/><circle cx="22" cy="255.7" r="1.5" fill="#e8e8e8" stroke="#a0a0a0" stroke-width="1"/><path d="M11 233.3 L27.1 244.15 L11 255 Z" fill="#f8f8f8" stroke="#8a1414" stroke-width="1.8" stroke-linejoin="round"/><line x1="6.4" y1="240.2" x2="11" y2="240.2" stroke="#8a1414" stroke-width="1.8" stroke-linecap="butt"/><line x1="6.4" y1="248.3" x2="11" y2="248.3" stroke="#8a1414" stroke-width="1.8" stroke-linecap="butt"/><line x1="27.1" y1="244.15" x2="31.9" y2="244.15" stroke="#8a1414" stroke-width="1.8" stroke-linecap="butt"/><line x1="13.5" y1="241.6" x2="18.1" y2="241.6" stroke="#8a1414" stroke-width="1.3" stroke-linecap="butt"/><line x1="13.3" y1="246.7" x2="17.9" y2="246.7" stroke="#8a1414" stroke-width="1.3" stroke-linecap="butt"/><line x1="15.6" y1="244.4" x2="15.6" y2="249" stroke="#8a1414" stroke-width="1.3" stroke-linecap="butt"/><line x1="13.4" y1="266.5" x2="13.4" y2="289.6" stroke="#1a1a1a" stroke-width="1.4" stroke-linecap="butt"/><line x1="7.2" y1="284.4" x2="30.8" y2="284.4" stroke="#1a1a1a" stroke-width="1.4" stroke-linecap="butt"/><path d="M13.4 277 H20.3 V284.4" fill="none" stroke="#1a1a1a" stroke-width="1.2" /></svg>
<div id="rtb" class="abs"></div>
<div class="abs tbtn" style="left:1245px;top:92px"></div>
<svg style="left:0;top:0;will-change:transform" width="1280" height="1000" viewBox="0 0 1280 1000"><path d="M1254.30 98.60 L1254.30 114.90 L1258.30 111.40 L1261.70 117.00 L1264.50 115.60 L1262.50 110.30 L1267.00 108.60 Z" fill="#f2f2f2" stroke="#555" stroke-width="1.2" stroke-linejoin="round"/><path d="M1251.2 136.6 V151.7 H1255 M1251.2 142 H1255" fill="none" stroke="#555" stroke-width="1.2" /><rect x="1249.2" y="130.2" width="23.4" height="6.4" fill="#f8f8f8" stroke="#7a7a7a" stroke-width="1" rx="1.2" /><rect x="1255" y="140.2" width="17.6" height="5.2" fill="#f8f8f8" stroke="#7a7a7a" stroke-width="1" rx="1.2" /><rect x="1255" y="149.4" width="17.6" height="5.2" fill="#f8f8f8" stroke="#7a7a7a" stroke-width="1" rx="1.2" /><path d="M1255.00 133.20 L1255.00 146.73 L1258.32 143.82 L1261.14 148.47 L1263.47 147.31 L1261.81 142.91 L1265.54 141.50 Z" fill="#f0f0f0" stroke="#666" stroke-width="1.1" stroke-linejoin="round"/><path d="M1253 165 L1269.1 175.85 L1253 186.7 Z" fill="#f8f8f8" stroke="#8a1414" stroke-width="1.8" stroke-linejoin="round"/><line x1="1248.4" y1="171.9" x2="1253" y2="171.9" stroke="#8a1414" stroke-width="1.8" stroke-linecap="butt"/><line x1="1248.4" y1="180" x2="1253" y2="180" stroke="#8a1414" stroke-width="1.8" stroke-linecap="butt"/><line x1="1269.1" y1="175.85" x2="1273.9" y2="175.85" stroke="#8a1414" stroke-width="1.8" stroke-linecap="butt"/><line x1="1255.5" y1="173.3" x2="1260.1" y2="173.3" stroke="#8a1414" stroke-width="1.3" stroke-linecap="butt"/><line x1="1255.3" y1="178.4" x2="1259.9" y2="178.4" stroke="#8a1414" stroke-width="1.3" stroke-linecap="butt"/><line x1="1257.6" y1="176.1" x2="1257.6" y2="180.7" stroke="#8a1414" stroke-width="1.3" stroke-linecap="butt"/><line x1="1261" y1="200.3" x2="1261" y2="210.8" stroke="#8a1414" stroke-width="2" stroke-linecap="butt"/><line x1="1252.2" y1="210.8" x2="1269.7" y2="210.8" stroke="#8a1414" stroke-width="2" stroke-linecap="butt"/><line x1="1255.4" y1="215" x2="1266.6" y2="215" stroke="#8a1414" stroke-width="2" stroke-linecap="butt"/><line x1="1258.9" y1="218.9" x2="1263" y2="218.9" stroke="#8a1414" stroke-width="2" stroke-linecap="butt"/><line x1="1250" y1="254.7" x2="1271.8" y2="233" stroke="#008a00" stroke-width="2.3" stroke-linecap="round"/><line x1="1250.6" y1="288.2" x2="1271.4" y2="267.4" stroke="#0000c4" stroke-width="4.2" stroke-linecap="round"/><rect x="1269" y="299.2" width="3.9" height="25.6" fill="#9a9a9a" stroke="none" stroke-width="1" rx="0" /><rect x="1249" y="301.3" width="11" height="2.5" fill="#9a9a9a" stroke="none" stroke-width="1" rx="0" /><rect x="1249" y="309.2" width="11" height="2.5" fill="#9a9a9a" stroke="none" stroke-width="1" rx="0" /><line x1="1260.2" y1="302.6" x2="1270.8" y2="310" stroke="#008a00" stroke-width="2.5" stroke-linecap="round"/><line x1="1260.2" y1="310.5" x2="1270.8" y2="318" stroke="#008a00" stroke-width="2.5" stroke-linecap="round"/><rect x="1269" y="333.2" width="3.9" height="25.5" fill="#9a9a9a" stroke="none" stroke-width="1" rx="0" /><rect x="1249" y="334.7" width="11.5" height="3.6" fill="#9a9a9a" stroke="none" stroke-width="1" rx="0" /><rect x="1249" y="344.3" width="11.5" height="3.6" fill="#9a9a9a" stroke="none" stroke-width="1" rx="0" /><line x1="1261.2" y1="336.6" x2="1270.6" y2="343.7" stroke="#0000c4" stroke-width="4.4" stroke-linecap="round"/><line x1="1261.2" y1="346.2" x2="1270.6" y2="353.4" stroke="#0000c4" stroke-width="4.4" stroke-linecap="round"/><line x1="1253.8" y1="372.7" x2="1268.2" y2="387.4" stroke="#0000c4" stroke-width="2" stroke-linecap="round"/><line x1="1268.2" y1="372.7" x2="1253.8" y2="387.4" stroke="#0000c4" stroke-width="2" stroke-linecap="round"/><line x1="1264.4" y1="402.2" x2="1264.4" y2="425.7" stroke="#9a9a9a" stroke-width="2.6" stroke-linecap="butt"/><line x1="1249" y1="413.9" x2="1264.4" y2="413.9" stroke="#9a9a9a" stroke-width="2.2" stroke-linecap="butt"/><circle cx="1264.4" cy="413.9" r="4.5" fill="#008a00" stroke="none" stroke-width="1"/><path d="M1255 451.8 L1261 438.3 L1267 451.8" fill="none" stroke="#000" stroke-width="1.9" stroke-linejoin="miter" stroke-linecap="butt"/><line x1="1257.04" y1="447.2" x2="1264.96" y2="447.2" stroke="#000" stroke-width="1.615" stroke-linecap="butt"/><line x1="1250.4" y1="456.5" x2="1271.4" y2="456.5" stroke="#008a00" stroke-width="2.5" stroke-linecap="round"/><path d="M1249.1 474.4 H1262.3 L1268.6 482.3 L1262.3 490.2 H1249.1 Z" fill="#ffffff" stroke="#8a1414" stroke-width="1.8" stroke-linejoin="round"/><line x1="1269.4" y1="482.3" x2="1273.4" y2="482.3" stroke="#008a00" stroke-width="2.2" stroke-linecap="round"/><path d="M1253 487.5 L1256.7 477.6 L1260.6 487.5" fill="none" stroke="#000" stroke-width="1.4" stroke-linejoin="miter" stroke-linecap="butt"/><line x1="1254.2" y1="484.3" x2="1259.34" y2="484.3" stroke="#000" stroke-width="1.19" stroke-linecap="butt"/><path d="M1248.5 503.5 H1273.5 V521.5 L1266.5 528.5 H1248.5 Z" fill="url(#gpage)" stroke="#8c8c8c" stroke-width="1" stroke-linejoin="round"/><path d="M1273.5 521.5 Q1267.5 522.5 1266.5 528.5 L1268.25 522.2 Z" fill="#ffffff" stroke="#9a9a9a" stroke-width="0.7" stroke-linejoin="round"/><path d="M1250.5 520.7 L1254.3 511.3 L1257.8 520.7" fill="none" stroke="#000" stroke-width="1.6" stroke-linejoin="miter" stroke-linecap="butt"/><line x1="1251.75" y1="517.6" x2="1256.65" y2="517.6" stroke="#000" stroke-width="1.36" stroke-linecap="butt"/><path d="M1260 511 H1265.2 L1269.4 516 L1265.2 521 H1260 Z" fill="none" stroke="#b5890f" stroke-width="2.2" stroke-linejoin="round"/><line x1="1269.8" y1="515.9" x2="1272.4" y2="515.9" stroke="#008a00" stroke-width="2" stroke-linecap="butt"/><rect x="1248.5" y="537.5" width="19.8" height="20" fill="#f4f4f4" stroke="#8c8c8c" stroke-width="1" rx="1" /><rect x="1251.3" y="540" width="19.6" height="20.3" fill="#f4f4f4" stroke="#8c8c8c" stroke-width="1" rx="1" /><path d="M1252.8 542 V553 M1252 545 H1254.5 M1252 549 H1254" fill="none" stroke="#cc3a3a" stroke-width="0.9" /><path d="M1254.4 542.5 H1274 V556.4 L1268 562.4 H1254.4 Z" fill="url(#gpage)" stroke="#8c8c8c" stroke-width="1" stroke-linejoin="round"/><path d="M1274 556.4 Q1269 557.4 1268 562.4 L1269.5 557 Z" fill="#ffffff" stroke="#9a9a9a" stroke-width="0.7" stroke-linejoin="round"/><path d="M1263.5 547 Q1262 548 1262.6 551 Q1263.4 552.6 1264.6 551 Q1265.4 548 1263.5 547 M1263.4 552.5 V554.5 M1263.4 554.5 Q1260.5 556 1262 557.5 Q1264 559 1265 560" fill="none" stroke="#55a820" stroke-width="1.2" /><path d="M1263.5 547 Q1264 545.5 1266 545.5 H1268 M1263.6 551.8 H1267.5" fill="none" stroke="#4a78c8" stroke-width="0.9" /><rect x="1258.5" y="547.2" width="3" height="1.6" fill="#3f7f92" stroke="none" stroke-width="1" rx="0" /><rect x="1265.5" y="554.2" width="3" height="1.6" fill="#3f7f92" stroke="none" stroke-width="1" rx="0" /><circle cx="1269" cy="545.6" r="0.7" fill="#d03030" stroke="none" stroke-width="1"/><circle cx="1268.3" cy="551.8" r="0.7" fill="#d03030" stroke="none" stroke-width="1"/><line x1="1257.3" y1="554.5" x2="1260.8" y2="554.9" stroke="#e08aa0" stroke-width="0.9" stroke-linecap="butt"/><rect x="1248.5" y="571.5" width="19.6" height="20" fill="#f4f4f4" stroke="#8c8c8c" stroke-width="1" rx="1" /><rect x="1251.3" y="572.9" width="19.6" height="20" fill="#f4f4f4" stroke="#8c8c8c" stroke-width="1" rx="1" /><path d="M1254.4 574.3 H1274 V589.9 L1267.5 596.4 H1254.4 Z" fill="#fbfbfb" stroke="#8c8c8c" stroke-width="1" stroke-linejoin="round"/><path d="M1274 589.9 Q1268.5 590.9 1267.5 596.4 L1269.12 590.55 Z" fill="#ffffff" stroke="#9a9a9a" stroke-width="0.7" stroke-linejoin="round"/><path d="M1256.7 583.1 L1259.6 576.4 L1262.4 583.1" fill="none" stroke="#000" stroke-width="1.3" stroke-linejoin="miter" stroke-linecap="butt"/><line x1="1257.65" y1="580.9" x2="1261.48" y2="580.9" stroke="#000" stroke-width="1.105" stroke-linecap="butt"/><path d="M1263.4 576.5 H1267.3 L1270 580.5 L1267.3 584.5 H1263.4 Z" fill="none" stroke="#b5890f" stroke-width="1.5" stroke-linejoin="round"/><line x1="1270.3" y1="580.4" x2="1273" y2="580.4" stroke="#008a00" stroke-width="1.3" stroke-linecap="butt"/><path d="M1248 587 H1254.3 V583.4 L1263.5 590.3 L1254.3 597 V593.6 H1248 Z" fill="url(#ggreen)" stroke="#4e9a06" stroke-width="0.6" /><path d="M1248.5 605.7 H1273.5 V623.9 L1267 630.4 H1248.5 Z" fill="url(#gpage)" stroke="#8c8c8c" stroke-width="1" stroke-linejoin="round"/><path d="M1273.5 623.9 Q1268 624.9 1267 630.4 L1268.62 624.55 Z" fill="#ffffff" stroke="#9a9a9a" stroke-width="0.7" stroke-linejoin="round"/><path d="M1249 612.5 H1255 L1259 617.75 L1255 623 H1249 Z" fill="none" stroke="#b5890f" stroke-width="2" stroke-linejoin="round"/><path d="M1261.3 622.5 L1265.3 613.6 L1269.2 622.5" fill="none" stroke="#000" stroke-width="1.6" stroke-linejoin="miter" stroke-linecap="butt"/><line x1="1262.6" y1="619.6" x2="1267.93" y2="619.6" stroke="#000" stroke-width="1.36" stroke-linecap="butt"/><line x1="1249.8" y1="662.6" x2="1272.2" y2="640.6" stroke="#0000dc" stroke-width="2.6" stroke-dasharray="4 2.7"/><text x="1251.3" y="696" font-family="Liberation Serif" font-size="30.5" font-weight="normal" fill="#222" >T</text><rect x="1253.2" y="710.3" width="3.6" height="1.6" fill="#8a8ab8" stroke="none" stroke-width="1" rx="0" /><rect x="1248.4" y="711.2" width="25.5" height="18.3" fill="url(#gcam)" stroke="#8c8cbc" stroke-width="1" rx="1" /><rect x="1267.5" y="712.8" width="5" height="1.6" fill="#c8dcf4" stroke="none" stroke-width="1" rx="0" /><circle cx="1264.1" cy="721.2" r="7.7" fill="#f6f6fa" stroke="#c0c0d4" stroke-width="0.8"/><circle cx="1264.1" cy="721.5" r="4" fill="#d8d8de" stroke="#9a9aa4" stroke-width="0.8"/><circle cx="1264.1" cy="721.5" r="1.8" fill="#050505" stroke="none" stroke-width="1"/><circle cx="1260.3" cy="714" r="1.1" fill="#2060d8" stroke="none" stroke-width="1"/><rect x="1263" y="713.8" width="2.2" height="1.1" fill="#111" stroke="none" stroke-width="1" rx="0" /><ellipse cx="1260.7" cy="764.3" rx="8.2" ry="2.2" fill="#a4a6a2" stroke="none" stroke-width="1"/><path d="M1252.3 750 L1253.2 763.6 Q1260.7 766.6 1268.2 763.6 L1269.1 750 Z" fill="url(#gtrash)" stroke="#8a8c88" stroke-width="0.8" /><line x1="1255.3" y1="752.5" x2="1255.62" y2="763.5" stroke="#b0b2ae" stroke-width="0.9" stroke-linecap="butt"/><line x1="1258" y1="752.5" x2="1258.16" y2="763.5" stroke="#b0b2ae" stroke-width="0.9" stroke-linecap="butt"/><line x1="1260.8" y1="752.5" x2="1260.79" y2="763.5" stroke="#b0b2ae" stroke-width="0.9" stroke-linecap="butt"/><line x1="1263.6" y1="752.5" x2="1263.43" y2="763.5" stroke="#b0b2ae" stroke-width="0.9" stroke-linecap="butt"/><line x1="1266.2" y1="752.5" x2="1265.87" y2="763.5" stroke="#b0b2ae" stroke-width="0.9" stroke-linecap="butt"/><ellipse cx="1260.8" cy="748" rx="9.1" ry="3.3" fill="#e4e5e3" stroke="#8e908c" stroke-width="0.9"/><path d="M1257.5 746 Q1260.8 741.5 1264.2 746" fill="none" stroke="#8e908c" stroke-width="1.3" /><ellipse cx="1260.8" cy="746.6" rx="2.6" ry="1" fill="#c8cac6" stroke="none" stroke-width="1"/></svg>
<div id="canvas" class="abs"></div>
<svg style="left:40px;top:88px" width="1182" height="834" viewBox="40 88 1182 834" shape-rendering="crispEdges"><defs><pattern id="grid" x="43" y="100" width="25" height="25" patternUnits="userSpaceOnUse"><rect x="0" y="0" width="1" height="1" fill="#848484"/><rect x="13" y="0" width="1" height="1" fill="#848484"/><rect x="0" y="12" width="1" height="1" fill="#848484"/><rect x="13" y="12" width="1" height="1" fill="#848484"/></pattern></defs><rect x="40" y="88" width="1182" height="834" fill="url(#grid)"/><polyline points="181,287 681,287 681,626 181,637 181,287" fill="none" stroke="#0000c2" stroke-width="2" stroke-dasharray="5.5 2.5"/><line x1="330" y1="362" x2="1031" y2="362" stroke="#008400" stroke-width="2" stroke-linecap="butt"/><line x1="593" y1="400" x2="1031" y2="400" stroke="#008400" stroke-width="2" stroke-linecap="butt"/><line x1="468" y1="437" x2="1031" y2="437" stroke="#008400" stroke-width="2" stroke-linecap="butt"/><line x1="593" y1="475" x2="1031" y2="475" stroke="#008400" stroke-width="2" stroke-linecap="butt"/><line x1="330" y1="500" x2="394" y2="500" stroke="#008400" stroke-width="2" stroke-linecap="butt"/><line x1="356" y1="575" x2="594" y2="575" stroke="#008400" stroke-width="2" stroke-linecap="butt"/><line x1="593" y1="399" x2="593" y2="576" stroke="#008400" stroke-width="2" stroke-linecap="butt"/><line x1="468" y1="362" x2="468" y2="375" stroke="#008400" stroke-width="2" stroke-linecap="butt"/><line x1="468" y1="425" x2="468" y2="451" stroke="#008400" stroke-width="2" stroke-linecap="butt"/><line x1="356" y1="500" x2="356" y2="513" stroke="#008400" stroke-width="2" stroke-linecap="butt"/><line x1="356" y1="562" x2="356" y2="576" stroke="#008400" stroke-width="2" stroke-linecap="butt"/><line x1="468" y1="550" x2="468" y2="575" stroke="#008400" stroke-width="2" stroke-linecap="butt"/><polygon points="466,357 471,357 474,360 474,365 471,368 466,368 463,365 463,360" fill="#008400"/><polygon points="466,432 471,432 474,435 474,440 471,443 466,443 463,440 463,435" fill="#008400"/><polygon points="354,495 359,495 362,498 362,503 359,506 354,506 351,503 351,498" fill="#008400"/><polygon points="466,570 471,570 474,573 474,578 471,581 466,581 463,578 463,573" fill="#008400"/><polygon points="591,470 596,470 599,473 599,478 596,481 591,481 588,478 588,473" fill="#008400"/><rect x="230" y="355" width="52" height="14" fill="#840000"/><rect x="230" y="492" width="52" height="15" fill="#840000"/><line x1="282" y1="362" x2="330" y2="362" stroke="#840000" stroke-width="2" stroke-linecap="butt"/><line x1="282" y1="500" x2="330" y2="500" stroke="#840000" stroke-width="2" stroke-linecap="butt"/><polyline points="250.96,337.30 250.96,348.58 250.47,349.80 249.74,350.10 247.30,350.10" fill="none" stroke="#008484" stroke-width="2" stroke-linecap="round" stroke-linejoin="round"/><polyline points="257.30,350.10 264.31,350.10" fill="none" stroke="#008484" stroke-width="2" stroke-linecap="round" stroke-linejoin="round"/><polyline points="260.96,350.10 260.96,337.30 259.86,339.01 258.76,340.10 257.60,340.65" fill="none" stroke="#008484" stroke-width="2" stroke-linecap="round" stroke-linejoin="round"/><polyline points="250.66,474.70 250.66,485.98 250.17,487.20 249.44,487.50 247.00,487.50" fill="none" stroke="#008484" stroke-width="2" stroke-linecap="round" stroke-linejoin="round"/><polyline points="255.90,477.14 256.51,475.92 257.12,475.31 258.34,474.70 261.39,474.70 262.60,475.31 263.21,475.92 263.82,477.14 263.82,478.36 263.21,480.19 255.90,487.50 263.82,487.50" fill="none" stroke="#008484" stroke-width="2" stroke-linecap="round" stroke-linejoin="round"/><polyline points="301.60,359.00 309.19,359.00" fill="none" stroke="#840000" stroke-width="2" stroke-linecap="round" stroke-linejoin="round"/><polyline points="305.56,359.00 305.56,346.40 304.37,348.08 303.18,349.16 301.93,349.70" fill="none" stroke="#840000" stroke-width="2" stroke-linecap="round" stroke-linejoin="round"/><polyline points="301.60,497.00 309.19,497.00" fill="none" stroke="#840000" stroke-width="2" stroke-linecap="round" stroke-linejoin="round"/><polyline points="305.56,497.00 305.56,484.40 304.37,486.08 303.18,487.16 301.93,487.70" fill="none" stroke="#840000" stroke-width="2" stroke-linecap="round" stroke-linejoin="round"/><rect x="461" y="382" width="15" height="35" fill="none" stroke="#840000" stroke-width="2"/><line x1="468.5" y1="374.5" x2="468.5" y2="382" stroke="#840000" stroke-width="2" stroke-linecap="butt"/><line x1="468.5" y1="417" x2="468.5" y2="424.5" stroke="#840000" stroke-width="2" stroke-linecap="butt"/><rect x="348" y="520" width="15" height="35" fill="none" stroke="#840000" stroke-width="2"/><line x1="355.5" y1="512.5" x2="355.5" y2="520" stroke="#840000" stroke-width="2" stroke-linecap="butt"/><line x1="355.5" y1="555" x2="355.5" y2="562.5" stroke="#840000" stroke-width="2" stroke-linecap="butt"/><polyline points="479.30,400.40 479.30,389.70 483.38,389.70 484.90,390.21 485.41,390.72 485.92,391.74 485.92,392.76 485.41,393.78 484.90,394.29 483.38,394.80 479.30,394.80" fill="none" stroke="#008484" stroke-width="1.7" stroke-linecap="round" stroke-linejoin="round"/><polyline points="482.36,394.80 485.92,400.40" fill="none" stroke="#008484" stroke-width="1.7" stroke-linecap="round" stroke-linejoin="round"/><polyline points="490.80,400.40 498.30,400.40" fill="none" stroke="#008484" stroke-width="1.7" stroke-linecap="round" stroke-linejoin="round"/><polyline points="494.71,400.40 494.71,389.70 493.54,391.13 492.37,392.04 491.13,392.50" fill="none" stroke="#008484" stroke-width="1.7" stroke-linecap="round" stroke-linejoin="round"/><polyline points="477.40,405.00 485.48,405.00 481.13,409.08 482.99,409.08 484.24,409.59 484.86,410.10 485.48,411.11 485.48,413.66 484.86,414.68 484.24,415.19 482.99,415.70 479.26,415.70 478.02,415.19 477.40,414.68" fill="none" stroke="#008484" stroke-width="1.7" stroke-linecap="round" stroke-linejoin="round"/><polyline points="490.80,405.00 490.80,415.70" fill="none" stroke="#008484" stroke-width="1.7" stroke-linecap="round" stroke-linejoin="round"/><polyline points="495.35,408.57 490.80,412.90" fill="none" stroke="#008484" stroke-width="1.7" stroke-linecap="round" stroke-linejoin="round"/><polyline points="492.67,411.11 495.35,415.70" fill="none" stroke="#008484" stroke-width="1.7" stroke-linecap="round" stroke-linejoin="round"/><polyline points="365.60,539.20 365.60,526.40 370.48,526.40 372.30,527.01 372.91,527.62 373.52,528.84 373.52,530.06 372.91,531.28 372.30,531.89 370.48,532.50 365.60,532.50" fill="none" stroke="#008484" stroke-width="2" stroke-linecap="round" stroke-linejoin="round"/><polyline points="369.26,532.50 373.52,539.20" fill="none" stroke="#008484" stroke-width="2" stroke-linecap="round" stroke-linejoin="round"/><polyline points="377.00,528.84 377.61,527.62 378.22,527.01 379.44,526.40 382.49,526.40 383.70,527.01 384.31,527.62 384.92,528.84 384.92,530.06 384.31,531.89 377.00,539.20 384.92,539.20" fill="none" stroke="#008484" stroke-width="2" stroke-linecap="round" stroke-linejoin="round"/><polyline points="365.30,541.40 373.22,541.40 368.96,546.28 370.79,546.28 372.00,546.89 372.61,547.50 373.22,548.71 373.22,551.76 372.61,552.98 372.00,553.59 370.79,554.20 367.13,554.20 365.91,553.59 365.30,552.98" fill="none" stroke="#008484" stroke-width="2" stroke-linecap="round" stroke-linejoin="round"/><polyline points="377.60,545.67 377.60,554.20" fill="none" stroke="#008484" stroke-width="2" stroke-linecap="round" stroke-linejoin="round"/><polyline points="377.60,547.50 378.82,546.28 380.04,545.67 381.26,545.67 382.48,546.28 383.09,547.50 383.09,554.20" fill="none" stroke="#008484" stroke-width="2" stroke-linecap="round" stroke-linejoin="round"/><polyline points="383.09,547.50 384.30,546.28 385.52,545.67 386.74,545.67 387.96,546.28 388.57,547.50 388.57,554.20" fill="none" stroke="#008484" stroke-width="2" stroke-linecap="round" stroke-linejoin="round"/><polyline points="397.66,541.40 400.10,541.40 401.31,542.01 402.53,543.23 403.14,544.45 403.75,546.28 403.75,549.32 403.14,551.15 402.53,552.37 401.31,553.59 400.10,554.20 397.66,554.20 396.44,553.59 395.22,552.37 394.61,551.15 394.00,549.32 394.00,546.28 394.61,544.45 395.22,543.23 396.44,542.01 397.66,541.40" fill="none" stroke="#008484" stroke-width="2" stroke-linecap="round" stroke-linejoin="round"/><polyline points="408.80,545.67 408.80,554.20" fill="none" stroke="#008484" stroke-width="2" stroke-linecap="round" stroke-linejoin="round"/><polyline points="408.80,547.50 410.02,546.28 411.24,545.67 412.46,545.67 413.68,546.28 414.29,547.50 414.29,554.20" fill="none" stroke="#008484" stroke-width="2" stroke-linecap="round" stroke-linejoin="round"/><polyline points="414.29,547.50 415.50,546.28 416.72,545.67 417.94,545.67 419.16,546.28 419.77,547.50 419.77,554.20" fill="none" stroke="#008484" stroke-width="2" stroke-linecap="round" stroke-linejoin="round"/><circle cx="460.5" cy="500.5" r="28" fill="none" stroke="#840000" stroke-width="3"/><line x1="468" y1="450" x2="468" y2="482" stroke="#840000" stroke-width="2" stroke-linecap="butt"/><line x1="468" y1="500" x2="468" y2="550" stroke="#840000" stroke-width="2" stroke-linecap="butt"/><line x1="394" y1="500" x2="446" y2="500" stroke="#840000" stroke-width="2" stroke-linecap="butt"/><line x1="446.5" y1="480" x2="446.5" y2="520" stroke="#840000" stroke-width="3" stroke-linecap="butt"/><line x1="451.5" y1="476" x2="451.5" y2="488.5" stroke="#840000" stroke-width="3" stroke-linecap="butt"/><line x1="451.5" y1="494" x2="451.5" y2="506.5" stroke="#840000" stroke-width="3" stroke-linecap="butt"/><line x1="451.5" y1="511" x2="451.5" y2="523.5" stroke="#840000" stroke-width="3" stroke-linecap="butt"/><line x1="451.5" y1="482" x2="476.8" y2="482" stroke="#840000" stroke-width="2" stroke-linecap="butt"/><line x1="451.5" y1="517" x2="476.8" y2="517" stroke="#840000" stroke-width="2" stroke-linecap="butt"/><line x1="451.5" y1="500" x2="469" y2="500" stroke="#840000" stroke-width="2" stroke-linecap="butt"/><line x1="475.8" y1="481" x2="475.8" y2="518" stroke="#840000" stroke-width="2" stroke-linecap="butt"/><polygon points="455.5,500 464,495.6 464,504.4" fill="#840000"/><polygon points="475.8,496 471.2,502.6 480.4,502.6" fill="#840000"/><polyline points="470.4,495.2 471.4,496.4 480.4,496.4 481.6,497.6" fill="none" stroke="#840000" stroke-width="1.6"/><polygon points="467,479 470,479 472,481 472,484 470,486 467,486 465,484 465,481" fill="#840000"/><polygon points="467,514 470,514 472,516 472,519 470,521 467,521 465,519 465,516" fill="#840000"/><polyline points="414.80,504.45 415.36,503.32 415.92,502.76 417.05,502.20 419.86,502.20 420.98,502.76 421.54,503.32 422.10,504.45 422.10,505.57 421.54,507.26 414.80,514.00 422.10,514.00" fill="none" stroke="#840000" stroke-width="2" stroke-linecap="round" stroke-linejoin="round"/><polyline points="483.00,466.00 483.00,459.21" fill="none" stroke="#840000" stroke-width="2" stroke-linecap="round" stroke-linejoin="round"/><polyline points="483.00,462.46 470.60,462.46 472.25,463.52 473.32,464.58 473.85,465.70" fill="none" stroke="#840000" stroke-width="2" stroke-linecap="round" stroke-linejoin="round"/><polyline points="470.60,541.40 470.60,533.60 475.40,537.80 475.40,536.00 476.00,534.80 476.60,534.20 477.80,533.60 480.80,533.60 482.00,534.20 482.60,534.80 483.20,536.00 483.20,539.60 482.60,540.80 482.00,541.40" fill="none" stroke="#840000" stroke-width="2" stroke-linecap="round" stroke-linejoin="round"/><polyline points="498.50,480.80 500.82,480.80 501.98,481.41 502.85,482.63 503.43,484.15 503.72,485.68 503.72,488.72 503.43,490.25 502.85,491.77 501.98,492.99 500.82,493.60 498.50,493.60 497.34,492.99 496.47,491.77 495.89,490.25 495.60,488.72 495.60,485.68 495.89,484.15 496.47,482.63 497.34,481.41 498.50,480.80" fill="none" stroke="#008484" stroke-width="2" stroke-linecap="round" stroke-linejoin="round"/><polyline points="500.82,491.16 504.01,495.12" fill="none" stroke="#008484" stroke-width="2" stroke-linecap="round" stroke-linejoin="round"/><polyline points="509.30,482.63 509.88,481.41 511.04,480.80 512.78,480.80 513.94,481.41 514.52,482.63 514.52,483.85 513.94,485.07 511.62,487.50 511.62,489.64" fill="none" stroke="#008484" stroke-width="2" stroke-linecap="round" stroke-linejoin="round"/><polyline points="511.62,492.69 511.62,493.60" fill="none" stroke="#008484" stroke-width="2" stroke-linecap="round" stroke-linejoin="round"/><polyline points="496.20,510.13 496.20,519.20" fill="none" stroke="#008484" stroke-width="2" stroke-linecap="round" stroke-linejoin="round"/><polyline points="496.20,505.60 496.20,506.57" fill="none" stroke="#008484" stroke-width="2" stroke-linecap="round" stroke-linejoin="round"/><polyline points="501.50,510.13 501.50,519.20" fill="none" stroke="#008484" stroke-width="2" stroke-linecap="round" stroke-linejoin="round"/><polyline points="501.50,512.72 502.15,511.43 503.12,510.46 505.06,510.13" fill="none" stroke="#008484" stroke-width="2" stroke-linecap="round" stroke-linejoin="round"/><polyline points="510.10,505.60 510.10,517.26 510.42,518.55 511.07,519.20 512.04,519.20" fill="none" stroke="#008484" stroke-width="2" stroke-linecap="round" stroke-linejoin="round"/><polyline points="516.00,505.60 516.00,517.26 516.32,518.55 516.97,519.20 517.94,519.20" fill="none" stroke="#008484" stroke-width="2" stroke-linecap="round" stroke-linejoin="round"/><polyline points="524.71,505.60 526.33,505.60 527.63,506.25 528.28,507.22 528.92,508.84 529.25,511.43 529.25,513.37 528.92,515.96 528.28,517.58 527.63,518.55 526.33,519.20 524.71,519.20 523.42,518.55 522.77,517.58 522.12,515.96 521.80,513.37 521.80,511.43 522.12,508.84 522.77,507.22 523.42,506.25 524.71,505.60" fill="none" stroke="#008484" stroke-width="2" stroke-linecap="round" stroke-linejoin="round"/><polyline points="533.90,519.20 541.35,519.20" fill="none" stroke="#008484" stroke-width="2" stroke-linecap="round" stroke-linejoin="round"/><polyline points="537.79,519.20 537.79,505.60 536.62,507.41 535.45,508.58 534.22,509.16" fill="none" stroke="#008484" stroke-width="2" stroke-linecap="round" stroke-linejoin="round"/><polyline points="551.50,505.60 546.00,514.99 554.10,514.99" fill="none" stroke="#008484" stroke-width="2" stroke-linecap="round" stroke-linejoin="round"/><polyline points="551.50,505.60 551.50,519.20" fill="none" stroke="#008484" stroke-width="2" stroke-linecap="round" stroke-linejoin="round"/><line x1="1031" y1="362" x2="1068" y2="362" stroke="#840000" stroke-width="2" stroke-linecap="butt"/><rect x="1068" y="350" width="25" height="25" fill="none" stroke="#840000" stroke-width="2"/><rect x="1068" y="359.8" width="16" height="4.4" fill="#840000"/><polyline points="1045.60,359.20 1053.07,359.20" fill="none" stroke="#840000" stroke-width="2" stroke-linecap="round" stroke-linejoin="round"/><polyline points="1049.50,359.20 1049.50,346.80 1048.33,348.45 1047.16,349.52 1045.92,350.05" fill="none" stroke="#840000" stroke-width="2" stroke-linecap="round" stroke-linejoin="round"/><line x1="1031" y1="400" x2="1068" y2="400" stroke="#840000" stroke-width="2" stroke-linecap="butt"/><rect x="1068" y="387" width="25" height="25" fill="none" stroke="#840000" stroke-width="2"/><rect x="1068" y="397.8" width="16" height="4.4" fill="#840000"/><rect x="1069" y="399.5" width="13.4" height="1" fill="#fff"/><polyline points="1045.60,397.20 1053.07,397.20" fill="none" stroke="#840000" stroke-width="2" stroke-linecap="round" stroke-linejoin="round"/><polyline points="1049.50,397.20 1049.50,384.80 1048.33,386.45 1047.16,387.52 1045.92,388.05" fill="none" stroke="#840000" stroke-width="2" stroke-linecap="round" stroke-linejoin="round"/><line x1="1031" y1="437" x2="1068" y2="437" stroke="#840000" stroke-width="2" stroke-linecap="butt"/><rect x="1068" y="425" width="25" height="25" fill="none" stroke="#840000" stroke-width="2"/><rect x="1068" y="434.8" width="16" height="4.4" fill="#840000"/><polyline points="1045.60,434.20 1053.07,434.20" fill="none" stroke="#840000" stroke-width="2" stroke-linecap="round" stroke-linejoin="round"/><polyline points="1049.50,434.20 1049.50,421.80 1048.33,423.45 1047.16,424.52 1045.92,425.05" fill="none" stroke="#840000" stroke-width="2" stroke-linecap="round" stroke-linejoin="round"/><line x1="1031" y1="475" x2="1068" y2="475" stroke="#840000" stroke-width="2" stroke-linecap="butt"/><rect x="1068" y="462" width="25" height="25" fill="none" stroke="#840000" stroke-width="2"/><rect x="1068" y="472.8" width="16" height="4.4" fill="#840000"/><rect x="1069" y="474.5" width="13.4" height="1" fill="#fff"/><polyline points="1045.60,472.20 1053.07,472.20" fill="none" stroke="#840000" stroke-width="2" stroke-linecap="round" stroke-linejoin="round"/><polyline points="1049.50,472.20 1049.50,459.80 1048.33,461.45 1047.16,462.52 1045.92,463.05" fill="none" stroke="#840000" stroke-width="2" stroke-linecap="round" stroke-linejoin="round"/><polyline points="1115.15,346.90 1115.15,358.84" fill="none" stroke="#0000c2" stroke-width="2.2" stroke-linecap="round" stroke-linejoin="round"/><polyline points="1109.00,352.90 1121.30,352.90" fill="none" stroke="#0000c2" stroke-width="2.2" stroke-linecap="round" stroke-linejoin="round"/><polyline points="1134.96,344.00 1128.09,344.00 1127.36,350.88 1128.09,350.15 1129.53,349.43 1132.79,349.43 1134.60,350.15 1135.69,351.24 1136.05,353.05 1136.05,355.58 1135.69,357.03 1134.60,358.48 1132.79,359.20 1129.53,359.20 1128.09,358.48 1127.00,357.39" fill="none" stroke="#0000c2" stroke-width="2.2" stroke-linecap="round" stroke-linejoin="round"/><polyline points="1141.40,349.07 1145.02,359.20 1148.64,349.07" fill="none" stroke="#0000c2" stroke-width="2.2" stroke-linecap="round" stroke-linejoin="round"/><polyline points="1128.14,386.20 1128.14,398.34 1127.43,400.13 1126.36,400.84 1124.93,401.20 1122.43,401.20" fill="none" stroke="#0000c2" stroke-width="2.2" stroke-linecap="round" stroke-linejoin="round"/><polyline points="1128.14,388.34 1127.07,386.91 1125.64,386.20 1123.86,386.20 1122.43,386.91 1121.36,388.34 1121.00,390.13 1121.00,392.27 1121.36,394.06 1122.43,395.49 1123.86,396.20 1125.64,396.20 1127.07,395.49 1128.14,394.06" fill="none" stroke="#0000c2" stroke-width="2.2" stroke-linecap="round" stroke-linejoin="round"/><polyline points="1134.30,386.20 1134.30,396.20" fill="none" stroke="#0000c2" stroke-width="2.2" stroke-linecap="round" stroke-linejoin="round"/><polyline points="1134.30,388.70 1135.37,387.27 1136.80,386.20 1138.94,386.20 1140.37,386.91 1141.44,388.70 1141.44,396.20" fill="none" stroke="#0000c2" stroke-width="2.2" stroke-linecap="round" stroke-linejoin="round"/><polyline points="1155.04,381.20 1155.04,396.20" fill="none" stroke="#0000c2" stroke-width="2.2" stroke-linecap="round" stroke-linejoin="round"/><polyline points="1155.04,388.34 1153.97,386.91 1152.54,386.20 1150.76,386.20 1149.33,386.91 1148.26,388.34 1147.90,390.13 1147.90,392.27 1148.26,394.06 1149.33,395.49 1150.76,396.20 1152.54,396.20 1153.97,395.49 1155.04,394.06" fill="none" stroke="#0000c2" stroke-width="2.2" stroke-linecap="round" stroke-linejoin="round"/><polyline points="1123.86,424.20 1122.43,424.91 1121.36,426.34 1121.00,428.13 1121.00,430.27 1121.36,432.06 1122.43,433.49 1123.86,434.20 1126.00,434.20 1127.43,433.49 1128.50,432.06 1128.86,430.27 1128.86,428.13 1128.50,426.34 1127.43,424.91 1126.00,424.20 1123.86,424.20" fill="none" stroke="#0000c2" stroke-width="2.2" stroke-linecap="round" stroke-linejoin="round"/><polyline points="1134.90,424.20 1134.90,431.70 1135.61,433.49 1137.04,434.20 1139.19,434.20 1140.61,433.49 1142.04,431.70" fill="none" stroke="#0000c2" stroke-width="2.2" stroke-linecap="round" stroke-linejoin="round"/><polyline points="1142.04,424.20 1142.04,434.20" fill="none" stroke="#0000c2" stroke-width="2.2" stroke-linecap="round" stroke-linejoin="round"/><polyline points="1148.89,419.20 1148.89,431.34 1149.60,433.49 1151.03,434.20 1152.46,434.20" fill="none" stroke="#0000c2" stroke-width="2.2" stroke-linecap="round" stroke-linejoin="round"/><polyline points="1147.10,424.20 1152.10,424.20" fill="none" stroke="#0000c2" stroke-width="2.2" stroke-linecap="round" stroke-linejoin="round"/><polyline points="1128.14,461.20 1128.14,473.34 1127.43,475.13 1126.36,475.84 1124.93,476.20 1122.43,476.20" fill="none" stroke="#0000c2" stroke-width="2.2" stroke-linecap="round" stroke-linejoin="round"/><polyline points="1128.14,463.34 1127.07,461.91 1125.64,461.20 1123.86,461.20 1122.43,461.91 1121.36,463.34 1121.00,465.13 1121.00,467.27 1121.36,469.06 1122.43,470.49 1123.86,471.20 1125.64,471.20 1127.07,470.49 1128.14,469.06" fill="none" stroke="#0000c2" stroke-width="2.2" stroke-linecap="round" stroke-linejoin="round"/><polyline points="1134.30,461.20 1134.30,471.20" fill="none" stroke="#0000c2" stroke-width="2.2" stroke-linecap="round" stroke-linejoin="round"/><polyline points="1134.30,463.70 1135.37,462.27 1136.80,461.20 1138.94,461.20 1140.37,461.91 1141.44,463.70 1141.44,471.20" fill="none" stroke="#0000c2" stroke-width="2.2" stroke-linecap="round" stroke-linejoin="round"/><polyline points="1155.04,456.20 1155.04,471.20" fill="none" stroke="#0000c2" stroke-width="2.2" stroke-linecap="round" stroke-linejoin="round"/><polyline points="1155.04,463.34 1153.97,461.91 1152.54,461.20 1150.76,461.20 1149.33,461.91 1148.26,463.34 1147.90,465.13 1147.90,467.27 1148.26,469.06 1149.33,470.49 1150.76,471.20 1152.54,471.20 1153.97,470.49 1155.04,469.06" fill="none" stroke="#0000c2" stroke-width="2.2" stroke-linecap="round" stroke-linejoin="round"/><rect x="793" y="300" width="27" height="1" fill="#000"/><rect x="806" y="287" width="1" height="27" fill="#000"/></svg>
<div id="vsb" class="abs"></div>
<div class="abs sbtn sbv" style="left:1226px;top:87px;width:15px;height:15px;border-radius:4px 4px 0 0"></div>
<div class="abs sbtn sbv" style="left:1226px;top:908px;width:15px;height:15px;border-radius:0 0 4px 4px"></div>
<div class="abs thumbv" style="top:238px;height:325px"></div>
<div id="hsb" class="abs"></div>
<div class="abs sbtn" style="left:40px;top:926px;width:14px;height:15px;border-radius:4px 0 0 4px"></div>
<div class="abs sbtn" style="left:1208px;top:926px;width:15px;height:15px;border-radius:0 4px 4px 0"></div>
<div class="abs thumbh" style="left:270px;width:466px"></div>
<svg style="left:0;top:0;will-change:transform" width="1280" height="1000" viewBox="0 0 1280 1000"><path d="M1230.3 96.3 L1233.5 93 L1236.7 96.3" fill="none" stroke="#1e1e1e" stroke-width="1.6" /><path d="M1230.3 913.2 L1233.5 916.5 L1236.7 913.2" fill="none" stroke="#1e1e1e" stroke-width="1.6" /><path d="M48.5 929.8 L45 933.3 L48.5 936.8" fill="none" stroke="#1e1e1e" stroke-width="1.6" /><path d="M1213.5 929.8 L1217 933.3 L1213.5 936.8" fill="none" stroke="#1e1e1e" stroke-width="1.6" /><rect x="1231" y="396" width="5" height="1" fill="#3f618f" stroke="none" stroke-width="1" rx="0" /><rect x="1231" y="397" width="5" height="1" fill="#a9c6ec" stroke="none" stroke-width="1" rx="0" /><rect x="1231" y="399" width="5" height="1" fill="#3f618f" stroke="none" stroke-width="1" rx="0" /><rect x="1231" y="400" width="5" height="1" fill="#a9c6ec" stroke="none" stroke-width="1" rx="0" /><rect x="1231" y="402" width="5" height="1" fill="#3f618f" stroke="none" stroke-width="1" rx="0" /><rect x="1231" y="403" width="5" height="1" fill="#a9c6ec" stroke="none" stroke-width="1" rx="0" /><rect x="499" y="931" width="1" height="5" fill="#3f618f" stroke="none" stroke-width="1" rx="0" /><rect x="500" y="931" width="1" height="5" fill="#a9c6ec" stroke="none" stroke-width="1" rx="0" /><rect x="502" y="931" width="1" height="5" fill="#3f618f" stroke="none" stroke-width="1" rx="0" /><rect x="503" y="931" width="1" height="5" fill="#a9c6ec" stroke="none" stroke-width="1" rx="0" /><rect x="505" y="931" width="1" height="5" fill="#3f618f" stroke="none" stroke-width="1" rx="0" /><rect x="506" y="931" width="1" height="5" fill="#a9c6ec" stroke="none" stroke-width="1" rx="0" /></svg>
<div id="l941" class="abs"></div><div id="msg" class="abs"></div>
<div id="status" class="abs">
<span style="left:4.95px;letter-spacing:0px;transform-origin:0 0;transform:scaleX(0.9505)">File</span>
<span style="left:32.5px;letter-spacing:0.434px;">/home/dmitry/1/del/aqustop/aqustop.sch</span>
<span style="left:327.5px;letter-spacing:0px;transform-origin:0 0;transform:scaleX(0.9524)">saved</span>
<span style="left:433.75px;letter-spacing:0px;">Z</span>
<span style="left:445.8px;letter-spacing:0px;transform-origin:0 0;transform:scaleX(0.9138)">2,75</span>
<span style="left:502.8px;letter-spacing:0px;transform-origin:0 0;transform:scaleX(0.9523)">X133,35</span>
<span style="left:563.75px;letter-spacing:0px;">Y</span>
<span style="left:577.0px;letter-spacing:0px;transform-origin:0 0;transform:scaleX(0.8908)">57,15</span>
<span style="left:710.7px;letter-spacing:0px;transform-origin:0 0;transform:scaleX(0.9928)">dx</span>
<span style="left:730.58px;letter-spacing:0px;transform-origin:0 0;transform:scaleX(0.9195)">133,35</span>
<span style="left:780.8px;letter-spacing:0px;transform-origin:0 0;transform:scaleX(0.8784)">dy</span>
<span style="left:800.0px;letter-spacing:0px;transform-origin:0 0;transform:scaleX(0.8908)">57,15</span>
<span style="left:841.8px;letter-spacing:0px;transform-origin:0 0;transform:scaleX(0.935)">dist</span>
<span style="left:869.28px;letter-spacing:0px;transform-origin:0 0;transform:scaleX(0.9195)">145,08</span>
<span style="left:1035.9px;letter-spacing:0.438px;">mm</span>
</div>
</body></html>
